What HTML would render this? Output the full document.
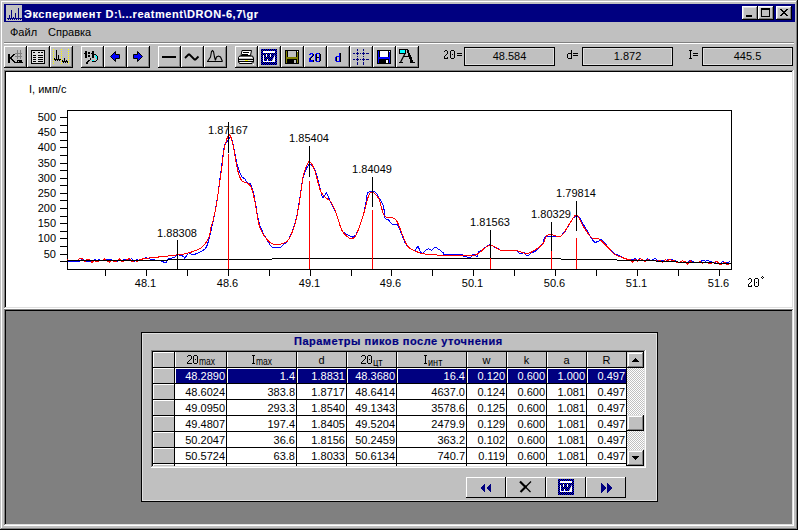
<!DOCTYPE html>
<html><head><meta charset="utf-8"><style>
html,body{margin:0;padding:0;width:798px;height:530px;overflow:hidden;background:#c0c0c0}
body{position:relative;font-family:"Liberation Sans", sans-serif;}
div{box-sizing:border-box}
svg{overflow:visible}
.t{}
</style></head><body>
<svg width="0" height="0" style="position:absolute;left:0;top:0"><filter id="crisp" x="0" y="0" width="100%" height="100%" color-interpolation-filters="sRGB"><feComponentTransfer><feFuncA type="discrete" tableValues="0 0 0 1 1 1 1 1"/></feComponentTransfer></filter></svg><div style="position:absolute;left:0px;top:0px;width:798px;height:530px;background:#c0c0c0;"></div><div style="position:absolute;left:0px;top:0px;width:798px;height:1px;background:#c0c0c0"></div><div style="position:absolute;left:0px;top:0px;width:1px;height:530px;background:#c0c0c0"></div><div style="position:absolute;left:0px;top:529px;width:798px;height:1px;background:#000"></div><div style="position:absolute;left:797px;top:0px;width:1px;height:530px;background:#000"></div><div style="position:absolute;left:1px;top:1px;width:796px;height:1px;background:#fff"></div><div style="position:absolute;left:1px;top:1px;width:1px;height:528px;background:#fff"></div><div style="position:absolute;left:1px;top:528px;width:796px;height:1px;background:#808080"></div><div style="position:absolute;left:796px;top:1px;width:1px;height:528px;background:#808080"></div><div style="position:absolute;left:4px;top:4px;width:791px;height:18px;background:#000080;"></div><svg style="position:absolute;left:6px;top:5px" width="16" height="16" shape-rendering="crispEdges"><rect x="0" y="0" width="16" height="16" fill="#c0c0c0"/><g fill="#000080"><rect x="3" y="10" width="1" height="4"/><rect x="5" y="5" width="1" height="9"/><rect x="7" y="12" width="1" height="2"/><rect x="9" y="8" width="1" height="6"/><rect x="12" y="3" width="1" height="11"/><rect x="1" y="13" width="15" height="1"/><rect x="2" y="14" width="1" height="1"/><rect x="4" y="14" width="1" height="1"/><rect x="6" y="14" width="1" height="1"/><rect x="8" y="14" width="1" height="1"/><rect x="10" y="14" width="1" height="1"/><rect x="12" y="14" width="1" height="1"/><rect x="14" y="14" width="1" height="1"/></g></svg><div class="t" style="position:absolute;left:24px;top:9px;font-size:11px;line-height:11px;color:#fff;white-space:nowrap;font-weight:bold;letter-spacing:0.55px;-webkit-text-stroke:0.1px #fff">Эксперимент D:\...reatment\DRON-6,7\gr</div><div style="position:absolute;left:742px;top:6px;width:16px;height:14px;background:#c0c0c0"></div><div style="position:absolute;left:742px;top:6px;width:16px;height:1px;background:#fff"></div><div style="position:absolute;left:742px;top:6px;width:1px;height:14px;background:#fff"></div><div style="position:absolute;left:742px;top:19px;width:16px;height:1px;background:#000"></div><div style="position:absolute;left:757px;top:6px;width:1px;height:14px;background:#000"></div><div style="position:absolute;left:743px;top:7px;width:14px;height:1px;background:#dfdfdf"></div><div style="position:absolute;left:743px;top:7px;width:1px;height:12px;background:#dfdfdf"></div><div style="position:absolute;left:743px;top:18px;width:14px;height:1px;background:#808080"></div><div style="position:absolute;left:756px;top:7px;width:1px;height:12px;background:#808080"></div><div style="position:absolute;left:758px;top:6px;width:16px;height:14px;background:#c0c0c0"></div><div style="position:absolute;left:758px;top:6px;width:16px;height:1px;background:#fff"></div><div style="position:absolute;left:758px;top:6px;width:1px;height:14px;background:#fff"></div><div style="position:absolute;left:758px;top:19px;width:16px;height:1px;background:#000"></div><div style="position:absolute;left:773px;top:6px;width:1px;height:14px;background:#000"></div><div style="position:absolute;left:759px;top:7px;width:14px;height:1px;background:#dfdfdf"></div><div style="position:absolute;left:759px;top:7px;width:1px;height:12px;background:#dfdfdf"></div><div style="position:absolute;left:759px;top:18px;width:14px;height:1px;background:#808080"></div><div style="position:absolute;left:772px;top:7px;width:1px;height:12px;background:#808080"></div><div style="position:absolute;left:776px;top:6px;width:16px;height:14px;background:#c0c0c0"></div><div style="position:absolute;left:776px;top:6px;width:16px;height:1px;background:#fff"></div><div style="position:absolute;left:776px;top:6px;width:1px;height:14px;background:#fff"></div><div style="position:absolute;left:776px;top:19px;width:16px;height:1px;background:#000"></div><div style="position:absolute;left:791px;top:6px;width:1px;height:14px;background:#000"></div><div style="position:absolute;left:777px;top:7px;width:14px;height:1px;background:#dfdfdf"></div><div style="position:absolute;left:777px;top:7px;width:1px;height:12px;background:#dfdfdf"></div><div style="position:absolute;left:777px;top:18px;width:14px;height:1px;background:#808080"></div><div style="position:absolute;left:790px;top:7px;width:1px;height:12px;background:#808080"></div><div style="position:absolute;left:746px;top:15px;width:6px;height:2px;background:#000;"></div><div style="position:absolute;left:761px;top:8px;width:9px;height:9px;background:#000;"></div><div style="position:absolute;left:762px;top:10px;width:7px;height:6px;background:#c0c0c0;"></div><svg style="position:absolute;left:776px;top:6px" width="16" height="14" shape-rendering="crispEdges"><path d="M4 3h2v1h1v1h2v-1h1v-1h2v1h-1v1h-1v1h-1v1h1v1h1v1h1v1h-2v-1h-1v-1h-2v1h-1v1h-2v-1h1v-1h1v-1h1v-1h-1v-1h-1v-1h-1z" fill="#000"/></svg><div class="t" style="position:absolute;left:10px;top:27px;font-size:11px;line-height:11px;color:#000;white-space:nowrap;">Файл</div><div class="t" style="position:absolute;left:48px;top:27px;font-size:11px;line-height:11px;color:#000;white-space:nowrap;">Справка</div><div style="position:absolute;left:4px;top:42px;width:790px;height:1px;background:#808080;"></div><div style="position:absolute;left:4px;top:43px;width:790px;height:1px;background:#fff;"></div><div style="position:absolute;left:4px;top:46px;width:23px;height:22px;background:#c0c0c0"></div><div style="position:absolute;left:4px;top:46px;width:23px;height:1px;background:#fff"></div><div style="position:absolute;left:4px;top:46px;width:1px;height:22px;background:#fff"></div><div style="position:absolute;left:4px;top:67px;width:23px;height:1px;background:#000"></div><div style="position:absolute;left:26px;top:46px;width:1px;height:22px;background:#000"></div><div style="position:absolute;left:5px;top:47px;width:21px;height:1px;background:#c0c0c0"></div><div style="position:absolute;left:5px;top:47px;width:1px;height:20px;background:#c0c0c0"></div><div style="position:absolute;left:5px;top:66px;width:21px;height:1px;background:#808080"></div><div style="position:absolute;left:25px;top:47px;width:1px;height:20px;background:#808080"></div><div style="position:absolute;left:27px;top:46px;width:23px;height:22px;background:#c0c0c0"></div><div style="position:absolute;left:27px;top:46px;width:23px;height:1px;background:#fff"></div><div style="position:absolute;left:27px;top:46px;width:1px;height:22px;background:#fff"></div><div style="position:absolute;left:27px;top:67px;width:23px;height:1px;background:#000"></div><div style="position:absolute;left:49px;top:46px;width:1px;height:22px;background:#000"></div><div style="position:absolute;left:28px;top:47px;width:21px;height:1px;background:#c0c0c0"></div><div style="position:absolute;left:28px;top:47px;width:1px;height:20px;background:#c0c0c0"></div><div style="position:absolute;left:28px;top:66px;width:21px;height:1px;background:#808080"></div><div style="position:absolute;left:48px;top:47px;width:1px;height:20px;background:#808080"></div><div style="position:absolute;left:50px;top:46px;width:23px;height:22px;background:#c0c0c0"></div><div style="position:absolute;left:50px;top:46px;width:23px;height:1px;background:#fff"></div><div style="position:absolute;left:50px;top:46px;width:1px;height:22px;background:#fff"></div><div style="position:absolute;left:50px;top:67px;width:23px;height:1px;background:#000"></div><div style="position:absolute;left:72px;top:46px;width:1px;height:22px;background:#000"></div><div style="position:absolute;left:51px;top:47px;width:21px;height:1px;background:#c0c0c0"></div><div style="position:absolute;left:51px;top:47px;width:1px;height:20px;background:#c0c0c0"></div><div style="position:absolute;left:51px;top:66px;width:21px;height:1px;background:#808080"></div><div style="position:absolute;left:71px;top:47px;width:1px;height:20px;background:#808080"></div><div style="position:absolute;left:81px;top:46px;width:23px;height:22px;background:#c0c0c0"></div><div style="position:absolute;left:81px;top:46px;width:23px;height:1px;background:#fff"></div><div style="position:absolute;left:81px;top:46px;width:1px;height:22px;background:#fff"></div><div style="position:absolute;left:81px;top:67px;width:23px;height:1px;background:#000"></div><div style="position:absolute;left:103px;top:46px;width:1px;height:22px;background:#000"></div><div style="position:absolute;left:82px;top:47px;width:21px;height:1px;background:#c0c0c0"></div><div style="position:absolute;left:82px;top:47px;width:1px;height:20px;background:#c0c0c0"></div><div style="position:absolute;left:82px;top:66px;width:21px;height:1px;background:#808080"></div><div style="position:absolute;left:102px;top:47px;width:1px;height:20px;background:#808080"></div><div style="position:absolute;left:104px;top:46px;width:23px;height:22px;background:#c0c0c0"></div><div style="position:absolute;left:104px;top:46px;width:23px;height:1px;background:#fff"></div><div style="position:absolute;left:104px;top:46px;width:1px;height:22px;background:#fff"></div><div style="position:absolute;left:104px;top:67px;width:23px;height:1px;background:#000"></div><div style="position:absolute;left:126px;top:46px;width:1px;height:22px;background:#000"></div><div style="position:absolute;left:105px;top:47px;width:21px;height:1px;background:#c0c0c0"></div><div style="position:absolute;left:105px;top:47px;width:1px;height:20px;background:#c0c0c0"></div><div style="position:absolute;left:105px;top:66px;width:21px;height:1px;background:#808080"></div><div style="position:absolute;left:125px;top:47px;width:1px;height:20px;background:#808080"></div><div style="position:absolute;left:127px;top:46px;width:23px;height:22px;background:#c0c0c0"></div><div style="position:absolute;left:127px;top:46px;width:23px;height:1px;background:#fff"></div><div style="position:absolute;left:127px;top:46px;width:1px;height:22px;background:#fff"></div><div style="position:absolute;left:127px;top:67px;width:23px;height:1px;background:#000"></div><div style="position:absolute;left:149px;top:46px;width:1px;height:22px;background:#000"></div><div style="position:absolute;left:128px;top:47px;width:21px;height:1px;background:#c0c0c0"></div><div style="position:absolute;left:128px;top:47px;width:1px;height:20px;background:#c0c0c0"></div><div style="position:absolute;left:128px;top:66px;width:21px;height:1px;background:#808080"></div><div style="position:absolute;left:148px;top:47px;width:1px;height:20px;background:#808080"></div><div style="position:absolute;left:158px;top:46px;width:23px;height:22px;background:#c0c0c0"></div><div style="position:absolute;left:158px;top:46px;width:23px;height:1px;background:#fff"></div><div style="position:absolute;left:158px;top:46px;width:1px;height:22px;background:#fff"></div><div style="position:absolute;left:158px;top:67px;width:23px;height:1px;background:#000"></div><div style="position:absolute;left:180px;top:46px;width:1px;height:22px;background:#000"></div><div style="position:absolute;left:159px;top:47px;width:21px;height:1px;background:#c0c0c0"></div><div style="position:absolute;left:159px;top:47px;width:1px;height:20px;background:#c0c0c0"></div><div style="position:absolute;left:159px;top:66px;width:21px;height:1px;background:#808080"></div><div style="position:absolute;left:179px;top:47px;width:1px;height:20px;background:#808080"></div><div style="position:absolute;left:181px;top:46px;width:23px;height:22px;background:#c0c0c0"></div><div style="position:absolute;left:181px;top:46px;width:23px;height:1px;background:#fff"></div><div style="position:absolute;left:181px;top:46px;width:1px;height:22px;background:#fff"></div><div style="position:absolute;left:181px;top:67px;width:23px;height:1px;background:#000"></div><div style="position:absolute;left:203px;top:46px;width:1px;height:22px;background:#000"></div><div style="position:absolute;left:182px;top:47px;width:21px;height:1px;background:#c0c0c0"></div><div style="position:absolute;left:182px;top:47px;width:1px;height:20px;background:#c0c0c0"></div><div style="position:absolute;left:182px;top:66px;width:21px;height:1px;background:#808080"></div><div style="position:absolute;left:202px;top:47px;width:1px;height:20px;background:#808080"></div><div style="position:absolute;left:204px;top:46px;width:23px;height:22px;background:#c0c0c0"></div><div style="position:absolute;left:204px;top:46px;width:23px;height:1px;background:#fff"></div><div style="position:absolute;left:204px;top:46px;width:1px;height:22px;background:#fff"></div><div style="position:absolute;left:204px;top:67px;width:23px;height:1px;background:#000"></div><div style="position:absolute;left:226px;top:46px;width:1px;height:22px;background:#000"></div><div style="position:absolute;left:205px;top:47px;width:21px;height:1px;background:#c0c0c0"></div><div style="position:absolute;left:205px;top:47px;width:1px;height:20px;background:#c0c0c0"></div><div style="position:absolute;left:205px;top:66px;width:21px;height:1px;background:#808080"></div><div style="position:absolute;left:225px;top:47px;width:1px;height:20px;background:#808080"></div><div style="position:absolute;left:235px;top:46px;width:23px;height:22px;background:#c0c0c0"></div><div style="position:absolute;left:235px;top:46px;width:23px;height:1px;background:#fff"></div><div style="position:absolute;left:235px;top:46px;width:1px;height:22px;background:#fff"></div><div style="position:absolute;left:235px;top:67px;width:23px;height:1px;background:#000"></div><div style="position:absolute;left:257px;top:46px;width:1px;height:22px;background:#000"></div><div style="position:absolute;left:236px;top:47px;width:21px;height:1px;background:#c0c0c0"></div><div style="position:absolute;left:236px;top:47px;width:1px;height:20px;background:#c0c0c0"></div><div style="position:absolute;left:236px;top:66px;width:21px;height:1px;background:#808080"></div><div style="position:absolute;left:256px;top:47px;width:1px;height:20px;background:#808080"></div><div style="position:absolute;left:258px;top:46px;width:23px;height:22px;background:#c0c0c0"></div><div style="position:absolute;left:258px;top:46px;width:23px;height:1px;background:#fff"></div><div style="position:absolute;left:258px;top:46px;width:1px;height:22px;background:#fff"></div><div style="position:absolute;left:258px;top:67px;width:23px;height:1px;background:#000"></div><div style="position:absolute;left:280px;top:46px;width:1px;height:22px;background:#000"></div><div style="position:absolute;left:259px;top:47px;width:21px;height:1px;background:#c0c0c0"></div><div style="position:absolute;left:259px;top:47px;width:1px;height:20px;background:#c0c0c0"></div><div style="position:absolute;left:259px;top:66px;width:21px;height:1px;background:#808080"></div><div style="position:absolute;left:279px;top:47px;width:1px;height:20px;background:#808080"></div><div style="position:absolute;left:281px;top:46px;width:23px;height:22px;background:#c0c0c0"></div><div style="position:absolute;left:281px;top:46px;width:23px;height:1px;background:#fff"></div><div style="position:absolute;left:281px;top:46px;width:1px;height:22px;background:#fff"></div><div style="position:absolute;left:281px;top:67px;width:23px;height:1px;background:#000"></div><div style="position:absolute;left:303px;top:46px;width:1px;height:22px;background:#000"></div><div style="position:absolute;left:282px;top:47px;width:21px;height:1px;background:#c0c0c0"></div><div style="position:absolute;left:282px;top:47px;width:1px;height:20px;background:#c0c0c0"></div><div style="position:absolute;left:282px;top:66px;width:21px;height:1px;background:#808080"></div><div style="position:absolute;left:302px;top:47px;width:1px;height:20px;background:#808080"></div><div style="position:absolute;left:304px;top:46px;width:23px;height:22px;background:#c0c0c0"></div><div style="position:absolute;left:304px;top:46px;width:23px;height:1px;background:#fff"></div><div style="position:absolute;left:304px;top:46px;width:1px;height:22px;background:#fff"></div><div style="position:absolute;left:304px;top:67px;width:23px;height:1px;background:#000"></div><div style="position:absolute;left:326px;top:46px;width:1px;height:22px;background:#000"></div><div style="position:absolute;left:305px;top:47px;width:21px;height:1px;background:#c0c0c0"></div><div style="position:absolute;left:305px;top:47px;width:1px;height:20px;background:#c0c0c0"></div><div style="position:absolute;left:305px;top:66px;width:21px;height:1px;background:#808080"></div><div style="position:absolute;left:325px;top:47px;width:1px;height:20px;background:#808080"></div><div style="position:absolute;left:327px;top:46px;width:23px;height:22px;background:#c0c0c0"></div><div style="position:absolute;left:327px;top:46px;width:23px;height:1px;background:#fff"></div><div style="position:absolute;left:327px;top:46px;width:1px;height:22px;background:#fff"></div><div style="position:absolute;left:327px;top:67px;width:23px;height:1px;background:#000"></div><div style="position:absolute;left:349px;top:46px;width:1px;height:22px;background:#000"></div><div style="position:absolute;left:328px;top:47px;width:21px;height:1px;background:#c0c0c0"></div><div style="position:absolute;left:328px;top:47px;width:1px;height:20px;background:#c0c0c0"></div><div style="position:absolute;left:328px;top:66px;width:21px;height:1px;background:#808080"></div><div style="position:absolute;left:348px;top:47px;width:1px;height:20px;background:#808080"></div><div style="position:absolute;left:350px;top:46px;width:23px;height:22px;background:#c0c0c0"></div><div style="position:absolute;left:350px;top:46px;width:23px;height:1px;background:#fff"></div><div style="position:absolute;left:350px;top:46px;width:1px;height:22px;background:#fff"></div><div style="position:absolute;left:350px;top:67px;width:23px;height:1px;background:#000"></div><div style="position:absolute;left:372px;top:46px;width:1px;height:22px;background:#000"></div><div style="position:absolute;left:351px;top:47px;width:21px;height:1px;background:#c0c0c0"></div><div style="position:absolute;left:351px;top:47px;width:1px;height:20px;background:#c0c0c0"></div><div style="position:absolute;left:351px;top:66px;width:21px;height:1px;background:#808080"></div><div style="position:absolute;left:371px;top:47px;width:1px;height:20px;background:#808080"></div><div style="position:absolute;left:373px;top:46px;width:23px;height:22px;background:#c0c0c0"></div><div style="position:absolute;left:373px;top:46px;width:23px;height:1px;background:#fff"></div><div style="position:absolute;left:373px;top:46px;width:1px;height:22px;background:#fff"></div><div style="position:absolute;left:373px;top:67px;width:23px;height:1px;background:#000"></div><div style="position:absolute;left:395px;top:46px;width:1px;height:22px;background:#000"></div><div style="position:absolute;left:374px;top:47px;width:21px;height:1px;background:#c0c0c0"></div><div style="position:absolute;left:374px;top:47px;width:1px;height:20px;background:#c0c0c0"></div><div style="position:absolute;left:374px;top:66px;width:21px;height:1px;background:#808080"></div><div style="position:absolute;left:394px;top:47px;width:1px;height:20px;background:#808080"></div><div style="position:absolute;left:396px;top:46px;width:23px;height:22px;background:#c0c0c0"></div><div style="position:absolute;left:396px;top:46px;width:23px;height:1px;background:#fff"></div><div style="position:absolute;left:396px;top:46px;width:1px;height:22px;background:#fff"></div><div style="position:absolute;left:396px;top:67px;width:23px;height:1px;background:#000"></div><div style="position:absolute;left:418px;top:46px;width:1px;height:22px;background:#000"></div><div style="position:absolute;left:397px;top:47px;width:21px;height:1px;background:#c0c0c0"></div><div style="position:absolute;left:397px;top:47px;width:1px;height:20px;background:#c0c0c0"></div><div style="position:absolute;left:397px;top:66px;width:21px;height:1px;background:#808080"></div><div style="position:absolute;left:417px;top:47px;width:1px;height:20px;background:#808080"></div><div style="position:absolute;left:464px;top:47px;width:91px;height:19px;background:#c0c0c0"></div><div style="position:absolute;left:464px;top:47px;width:91px;height:1px;background:#000"></div><div style="position:absolute;left:464px;top:47px;width:1px;height:19px;background:#000"></div><div style="position:absolute;left:464px;top:65px;width:91px;height:1px;background:#000"></div><div style="position:absolute;left:554px;top:47px;width:1px;height:19px;background:#000"></div><div style="position:absolute;left:465px;top:48px;width:89px;height:1px;background:#dfdfdf"></div><div style="position:absolute;left:465px;top:48px;width:1px;height:17px;background:#dfdfdf"></div><div style="position:absolute;left:465px;top:64px;width:89px;height:1px;background:#dfdfdf"></div><div style="position:absolute;left:553px;top:48px;width:1px;height:17px;background:#dfdfdf"></div><div class="t" style="position:absolute;left:409.5px;width:200px;top:51px;font-size:11px;line-height:11px;color:#000;white-space:nowrap;text-align:center;">48.584</div><div style="position:absolute;left:582px;top:47px;width:91px;height:19px;background:#c0c0c0"></div><div style="position:absolute;left:582px;top:47px;width:91px;height:1px;background:#000"></div><div style="position:absolute;left:582px;top:47px;width:1px;height:19px;background:#000"></div><div style="position:absolute;left:582px;top:65px;width:91px;height:1px;background:#000"></div><div style="position:absolute;left:672px;top:47px;width:1px;height:19px;background:#000"></div><div style="position:absolute;left:583px;top:48px;width:89px;height:1px;background:#dfdfdf"></div><div style="position:absolute;left:583px;top:48px;width:1px;height:17px;background:#dfdfdf"></div><div style="position:absolute;left:583px;top:64px;width:89px;height:1px;background:#dfdfdf"></div><div style="position:absolute;left:671px;top:48px;width:1px;height:17px;background:#dfdfdf"></div><div class="t" style="position:absolute;left:527.5px;width:200px;top:51px;font-size:11px;line-height:11px;color:#000;white-space:nowrap;text-align:center;">1.872</div><div style="position:absolute;left:702px;top:47px;width:91px;height:19px;background:#c0c0c0"></div><div style="position:absolute;left:702px;top:47px;width:91px;height:1px;background:#000"></div><div style="position:absolute;left:702px;top:47px;width:1px;height:19px;background:#000"></div><div style="position:absolute;left:702px;top:65px;width:91px;height:1px;background:#000"></div><div style="position:absolute;left:792px;top:47px;width:1px;height:19px;background:#000"></div><div style="position:absolute;left:703px;top:48px;width:89px;height:1px;background:#dfdfdf"></div><div style="position:absolute;left:703px;top:48px;width:1px;height:17px;background:#dfdfdf"></div><div style="position:absolute;left:703px;top:64px;width:89px;height:1px;background:#dfdfdf"></div><div style="position:absolute;left:791px;top:48px;width:1px;height:17px;background:#dfdfdf"></div><div class="t" style="position:absolute;left:647.5px;width:200px;top:51px;font-size:11px;line-height:11px;color:#000;white-space:nowrap;text-align:center;">445.5</div><svg style="position:absolute;left:444px;top:50px" width="18" height="9" shape-rendering="crispEdges"><g fill="#000"><rect x="1" y="0" width="1" height="1"/><rect x="2" y="0" width="1" height="1"/><rect x="0" y="1" width="1" height="1"/><rect x="3" y="1" width="1" height="1"/><rect x="3" y="2" width="1" height="1"/><rect x="3" y="3" width="1" height="1"/><rect x="2" y="4" width="1" height="1"/><rect x="1" y="5" width="1" height="1"/><rect x="0" y="6" width="1" height="1"/><rect x="0" y="7" width="1" height="1"/><rect x="3" y="7" width="1" height="1"/><rect x="0" y="8" width="1" height="1"/><rect x="1" y="8" width="1" height="1"/><rect x="2" y="8" width="1" height="1"/><rect x="3" y="8" width="1" height="1"/><rect x="7" y="0" width="1" height="1"/><rect x="8" y="0" width="1" height="1"/><rect x="9" y="0" width="1" height="1"/><rect x="6" y="1" width="1" height="1"/><rect x="10" y="1" width="1" height="1"/><rect x="6" y="2" width="1" height="1"/><rect x="10" y="2" width="1" height="1"/><rect x="6" y="3" width="1" height="1"/><rect x="10" y="3" width="1" height="1"/><rect x="6" y="4" width="1" height="1"/><rect x="8" y="4" width="1" height="1"/><rect x="10" y="4" width="1" height="1"/><rect x="6" y="5" width="1" height="1"/><rect x="10" y="5" width="1" height="1"/><rect x="6" y="6" width="1" height="1"/><rect x="10" y="6" width="1" height="1"/><rect x="6" y="7" width="1" height="1"/><rect x="10" y="7" width="1" height="1"/><rect x="7" y="8" width="1" height="1"/><rect x="8" y="8" width="1" height="1"/><rect x="9" y="8" width="1" height="1"/><rect x="13" y="3" width="1" height="1"/><rect x="14" y="3" width="1" height="1"/><rect x="15" y="3" width="1" height="1"/><rect x="16" y="3" width="1" height="1"/><rect x="17" y="3" width="1" height="1"/><rect x="13" y="5" width="1" height="1"/><rect x="14" y="5" width="1" height="1"/><rect x="15" y="5" width="1" height="1"/><rect x="16" y="5" width="1" height="1"/><rect x="17" y="5" width="1" height="1"/></g></svg><svg style="position:absolute;left:567px;top:50px" width="11" height="9" shape-rendering="crispEdges"><g fill="#000"><rect x="4" y="0" width="1" height="1"/><rect x="4" y="1" width="1" height="1"/><rect x="4" y="2" width="1" height="1"/><rect x="1" y="3" width="1" height="1"/><rect x="2" y="3" width="1" height="1"/><rect x="3" y="3" width="1" height="1"/><rect x="4" y="3" width="1" height="1"/><rect x="0" y="4" width="1" height="1"/><rect x="4" y="4" width="1" height="1"/><rect x="0" y="5" width="1" height="1"/><rect x="4" y="5" width="1" height="1"/><rect x="0" y="6" width="1" height="1"/><rect x="4" y="6" width="1" height="1"/><rect x="0" y="7" width="1" height="1"/><rect x="4" y="7" width="1" height="1"/><rect x="1" y="8" width="1" height="1"/><rect x="2" y="8" width="1" height="1"/><rect x="3" y="8" width="1" height="1"/><rect x="4" y="8" width="1" height="1"/><rect x="6" y="3" width="1" height="1"/><rect x="7" y="3" width="1" height="1"/><rect x="8" y="3" width="1" height="1"/><rect x="9" y="3" width="1" height="1"/><rect x="10" y="3" width="1" height="1"/><rect x="6" y="5" width="1" height="1"/><rect x="7" y="5" width="1" height="1"/><rect x="8" y="5" width="1" height="1"/><rect x="9" y="5" width="1" height="1"/><rect x="10" y="5" width="1" height="1"/></g></svg><svg style="position:absolute;left:689px;top:50px" width="9" height="9" shape-rendering="crispEdges"><g fill="#000"><rect x="0" y="0" width="1" height="1"/><rect x="1" y="0" width="1" height="1"/><rect x="2" y="0" width="1" height="1"/><rect x="1" y="1" width="1" height="1"/><rect x="1" y="2" width="1" height="1"/><rect x="1" y="3" width="1" height="1"/><rect x="1" y="4" width="1" height="1"/><rect x="1" y="5" width="1" height="1"/><rect x="1" y="6" width="1" height="1"/><rect x="1" y="7" width="1" height="1"/><rect x="0" y="8" width="1" height="1"/><rect x="1" y="8" width="1" height="1"/><rect x="2" y="8" width="1" height="1"/><rect x="4" y="3" width="1" height="1"/><rect x="5" y="3" width="1" height="1"/><rect x="6" y="3" width="1" height="1"/><rect x="7" y="3" width="1" height="1"/><rect x="8" y="3" width="1" height="1"/><rect x="4" y="5" width="1" height="1"/><rect x="5" y="5" width="1" height="1"/><rect x="6" y="5" width="1" height="1"/><rect x="7" y="5" width="1" height="1"/><rect x="8" y="5" width="1" height="1"/></g></svg><div style="position:absolute;left:4px;top:70px;width:790px;height:239px;background:#fff"></div><div style="position:absolute;left:4px;top:70px;width:790px;height:1px;background:#808080"></div><div style="position:absolute;left:4px;top:70px;width:1px;height:239px;background:#808080"></div><div style="position:absolute;left:4px;top:308px;width:790px;height:1px;background:#fff"></div><div style="position:absolute;left:793px;top:70px;width:1px;height:239px;background:#fff"></div><div style="position:absolute;left:5px;top:71px;width:788px;height:1px;background:#000"></div><div style="position:absolute;left:5px;top:71px;width:1px;height:237px;background:#000"></div><div style="position:absolute;left:5px;top:307px;width:788px;height:1px;background:#dfdfdf"></div><div style="position:absolute;left:792px;top:71px;width:1px;height:237px;background:#dfdfdf"></div><div style="position:absolute;left:4px;top:309px;width:790px;height:217px;background:#808080"></div><div style="position:absolute;left:4px;top:309px;width:790px;height:1px;background:#808080"></div><div style="position:absolute;left:4px;top:309px;width:1px;height:217px;background:#808080"></div><div style="position:absolute;left:4px;top:525px;width:790px;height:1px;background:#fff"></div><div style="position:absolute;left:793px;top:309px;width:1px;height:217px;background:#fff"></div><div style="position:absolute;left:5px;top:310px;width:788px;height:1px;background:#000"></div><div style="position:absolute;left:5px;top:310px;width:1px;height:215px;background:#000"></div><div style="position:absolute;left:5px;top:524px;width:788px;height:1px;background:#dfdfdf"></div><div style="position:absolute;left:792px;top:310px;width:1px;height:215px;background:#dfdfdf"></div><svg style="position:absolute;left:0;top:0" width="798" height="530"><rect x="67.5" y="110.5" width="664" height="159" fill="none" stroke="#000" stroke-width="1" shape-rendering="crispEdges"/><line x1="60" y1="261.5" x2="67" y2="261.5" stroke="#000" stroke-width="1" shape-rendering="crispEdges"/><line x1="60" y1="254.5" x2="67" y2="254.5" stroke="#000" stroke-width="1" shape-rendering="crispEdges"/><line x1="60" y1="246.5" x2="67" y2="246.5" stroke="#000" stroke-width="1" shape-rendering="crispEdges"/><line x1="60" y1="238.5" x2="67" y2="238.5" stroke="#000" stroke-width="1" shape-rendering="crispEdges"/><line x1="60" y1="231.5" x2="67" y2="231.5" stroke="#000" stroke-width="1" shape-rendering="crispEdges"/><line x1="60" y1="223.5" x2="67" y2="223.5" stroke="#000" stroke-width="1" shape-rendering="crispEdges"/><line x1="60" y1="216.5" x2="67" y2="216.5" stroke="#000" stroke-width="1" shape-rendering="crispEdges"/><line x1="60" y1="208.5" x2="67" y2="208.5" stroke="#000" stroke-width="1" shape-rendering="crispEdges"/><line x1="60" y1="200.5" x2="67" y2="200.5" stroke="#000" stroke-width="1" shape-rendering="crispEdges"/><line x1="60" y1="193.5" x2="67" y2="193.5" stroke="#000" stroke-width="1" shape-rendering="crispEdges"/><line x1="60" y1="185.5" x2="67" y2="185.5" stroke="#000" stroke-width="1" shape-rendering="crispEdges"/><line x1="60" y1="178.5" x2="67" y2="178.5" stroke="#000" stroke-width="1" shape-rendering="crispEdges"/><line x1="60" y1="170.5" x2="67" y2="170.5" stroke="#000" stroke-width="1" shape-rendering="crispEdges"/><line x1="60" y1="163.5" x2="67" y2="163.5" stroke="#000" stroke-width="1" shape-rendering="crispEdges"/><line x1="60" y1="155.5" x2="67" y2="155.5" stroke="#000" stroke-width="1" shape-rendering="crispEdges"/><line x1="60" y1="147.5" x2="67" y2="147.5" stroke="#000" stroke-width="1" shape-rendering="crispEdges"/><line x1="60" y1="140.5" x2="67" y2="140.5" stroke="#000" stroke-width="1" shape-rendering="crispEdges"/><line x1="60" y1="132.5" x2="67" y2="132.5" stroke="#000" stroke-width="1" shape-rendering="crispEdges"/><line x1="60" y1="125.5" x2="67" y2="125.5" stroke="#000" stroke-width="1" shape-rendering="crispEdges"/><line x1="60" y1="117.5" x2="67" y2="117.5" stroke="#000" stroke-width="1" shape-rendering="crispEdges"/><line x1="105.5" y1="270" x2="105.5" y2="276" stroke="#000" stroke-width="1" shape-rendering="crispEdges"/><line x1="146.5" y1="270" x2="146.5" y2="276" stroke="#000" stroke-width="1" shape-rendering="crispEdges"/><line x1="187.5" y1="270" x2="187.5" y2="276" stroke="#000" stroke-width="1" shape-rendering="crispEdges"/><line x1="228.5" y1="270" x2="228.5" y2="276" stroke="#000" stroke-width="1" shape-rendering="crispEdges"/><line x1="269.5" y1="270" x2="269.5" y2="276" stroke="#000" stroke-width="1" shape-rendering="crispEdges"/><line x1="310.5" y1="270" x2="310.5" y2="276" stroke="#000" stroke-width="1" shape-rendering="crispEdges"/><line x1="351.5" y1="270" x2="351.5" y2="276" stroke="#000" stroke-width="1" shape-rendering="crispEdges"/><line x1="391.5" y1="270" x2="391.5" y2="276" stroke="#000" stroke-width="1" shape-rendering="crispEdges"/><line x1="432.5" y1="270" x2="432.5" y2="276" stroke="#000" stroke-width="1" shape-rendering="crispEdges"/><line x1="473.5" y1="270" x2="473.5" y2="276" stroke="#000" stroke-width="1" shape-rendering="crispEdges"/><line x1="514.5" y1="270" x2="514.5" y2="276" stroke="#000" stroke-width="1" shape-rendering="crispEdges"/><line x1="555.5" y1="270" x2="555.5" y2="276" stroke="#000" stroke-width="1" shape-rendering="crispEdges"/><line x1="596.5" y1="270" x2="596.5" y2="276" stroke="#000" stroke-width="1" shape-rendering="crispEdges"/><line x1="637.5" y1="270" x2="637.5" y2="276" stroke="#000" stroke-width="1" shape-rendering="crispEdges"/><line x1="678.5" y1="270" x2="678.5" y2="276" stroke="#000" stroke-width="1" shape-rendering="crispEdges"/><line x1="719.5" y1="270" x2="719.5" y2="276" stroke="#000" stroke-width="1" shape-rendering="crispEdges"/><polyline points="67.0,260.9 69.5,261.3 72.0,261.4 74.5,261.9 77.0,261.3 79.5,261.9 82.0,259.0 84.5,260.4 87.0,261.9 89.5,261.0 92.0,261.8 94.5,259.3 97.0,260.4 99.5,259.7 102.0,260.6 104.5,260.7 107.0,258.9 109.5,259.6 112.0,259.8 114.5,261.8 117.0,261.4 119.5,259.4 122.0,261.5 124.5,259.3 127.0,260.9 129.5,259.3 132.0,258.9 134.5,261.7 137.0,259.6 140.0,260.5 142.6,259.0 145.6,257.7 147.3,258.0 149.0,258.8 151.8,259.4 155.0,260.0 158.3,260.5 161.4,261.0 164.0,262.2 166.0,262.8 167.0,261.0 168.2,258.8 170.9,258.2 173.8,257.7 176.0,256.1 178.3,254.9 181.4,255.5 184.0,256.6 184.6,257.9 185.0,258.3 186.6,255.4 188.5,252.6 190.3,253.5 192.4,254.9 195.3,254.1 198.6,252.6 202.2,251.1 205.4,248.7 207.3,244.9 208.8,239.7 210.7,232.0 212.2,225.0 212.6,223.6 213.0,222.0 214.5,214.6 216.3,205.0 217.9,194.6 219.3,184.0 220.5,174.8 221.6,166.0 222.8,156.2 223.9,148.0 224.9,144.8 226.1,143.0 228.3,139.2 230.6,137.0 231.8,138.9 233.0,144.0 234.9,153.5 236.8,163.0 238.0,167.2 239.0,170.0 240.4,173.8 242.0,177.0 243.5,178.1 245.0,179.0 246.6,181.7 248.0,184.0 249.0,183.2 250.0,183.0 251.6,186.6 253.3,192.0 254.6,198.3 256.0,206.0 257.5,215.9 259.8,226.0 264.1,234.9 268.3,242.0 270.5,245.5 272.0,247.0 273.4,247.2 275.0,247.0 277.4,247.8 280.0,248.0 282.0,246.3 284.0,244.0 286.2,242.5 288.7,239.4 292.1,232.1 295.4,222.4 297.8,210.8 299.7,199.0 301.2,188.7 302.5,180.4 303.5,176.1 304.7,173.0 306.8,167.7 309.2,164.0 311.9,165.4 314.5,169.0 316.1,173.1 317.5,178.0 319.1,184.1 320.6,190.0 321.8,195.1 323.0,198.0 324.6,195.5 326.4,193.0 328.1,196.1 330.0,201.0 332.5,205.4 335.3,211.0 338.5,220.4 341.3,229.0 342.1,231.4 343.0,232.0 346.2,234.2 350.0,236.0 352.9,237.2 356.0,235.0 360.2,224.8 364.0,212.6 365.9,202.6 367.0,195.0 367.8,192.4 369.0,192.0 371.9,191.6 375.0,192.0 376.5,193.3 378.0,196.0 380.9,200.8 383.6,206.6 384.5,212.9 385.0,218.0 386.3,219.1 388.0,219.4 390.2,222.1 392.6,224.7 395.0,224.9 397.0,224.7 397.8,225.2 398.7,227.0 400.9,232.2 403.2,238.0 404.5,241.5 406.0,244.3 409.0,247.3 412.0,249.6 413.7,250.6 415.0,250.4 416.5,248.2 418.0,246.6 419.3,248.9 420.4,251.9 421.5,253.2 422.6,253.4 424.1,252.1 425.7,250.4 427.2,249.4 428.7,248.9 430.2,249.7 431.7,250.4 433.1,248.9 434.7,247.4 436.9,248.1 439.2,249.6 441.7,251.5 443.8,253.4 443.9,254.4 445.3,254.9 452.8,255.0 460.4,254.9 462.1,254.4 462.0,254.2 462.3,255.2 463.4,256.4 467.2,257.1 471.0,257.2 472.0,256.1 472.5,254.9 474.0,254.6 475.5,254.9 476.3,256.4 477.0,257.2 477.6,254.9 478.5,252.0 479.9,251.0 482.0,250.0 485.9,247.0 489.8,244.5 492.2,245.3 494.0,247.0 495.5,247.5 497.0,248.0 498.9,249.2 501.0,250.4 503.2,250.9 506.0,251.0 510.5,250.4 514.7,250.0 516.7,250.8 518.0,252.0 519.5,253.2 521.0,254.0 522.5,252.9 524.0,252.0 525.4,254.1 527.0,256.0 528.9,254.9 531.0,253.0 533.0,252.3 535.5,251.0 539.3,247.3 543.0,243.0 544.0,239.0 546.0,236.0 553.2,236.3 561.0,236.0 565.7,230.6 569.4,224.0 573.1,218.2 576.6,215.0 579.9,218.4 583.0,224.0 585.5,227.9 588.0,232.0 591.3,238.1 594.9,242.8 598.3,241.2 601.7,239.4 605.1,243.1 608.5,248.0 611.5,251.2 615.3,254.0 622.5,257.3 628.8,259.8 630.0,259.7 632.5,259.4 635.0,258.7 637.5,260.9 640.0,258.3 642.5,259.8 645.0,261.0 647.5,258.5 650.0,260.0 652.5,260.1 655.0,258.4 657.5,260.4 660.0,261.4 662.5,260.7 665.0,261.5 667.5,259.8 670.0,260.0 672.5,259.6 675.0,260.8 677.5,262.1 680.0,262.1 682.5,262.6 685.0,261.5 687.5,262.5 690.0,260.6 692.5,261.2 695.0,262.3 697.5,262.5 700.0,261.6 702.5,260.6 705.0,261.1 707.5,260.9 710.0,261.1 712.5,262.7 715.0,261.9 717.5,264.0 720.0,263.9 722.5,261.5 725.0,262.4 727.5,262.8 730.0,261.4" fill="none" stroke="#0000ff" stroke-width="1" shape-rendering="crispEdges"/><polyline points="67.0,259.5 69.5,260.7 72.0,260.0 74.5,260.9 77.0,261.0 79.5,258.8 82.0,258.6 84.5,261.8 87.0,259.5 89.5,259.4 92.0,262.5 94.5,260.4 97.0,261.8 99.5,260.4 102.0,261.1 104.5,259.1 107.0,261.0 109.5,262.0 112.0,260.6 114.5,261.5 117.0,261.2 119.5,258.8 122.0,261.5 124.5,260.9 127.0,259.7 129.5,258.6 132.0,262.0 134.5,260.4 137.0,261.4 140.0,259.4 142.0,259.1 144.9,258.6 148.2,258.1 151.3,257.7 154.0,257.4 156.7,257.2 159.5,256.9 162.5,256.6 166.0,256.2 169.9,255.8 173.8,255.3 177.2,254.9 180.0,254.5 182.5,254.2 184.9,253.8 187.4,253.2 190.3,252.4 193.3,251.4 196.2,250.3 198.6,249.2 200.4,248.2 201.9,247.2 203.1,246.0 204.3,244.7 205.6,243.1 206.8,241.4 207.9,239.5 208.8,237.4 209.5,235.0 210.1,232.3 210.5,229.6 211.0,227.3 211.5,225.6 211.9,224.3 212.4,222.9 213.0,220.7 213.7,217.5 214.6,213.7 215.5,209.4 216.3,205.0 217.1,200.3 217.9,195.3 218.6,190.2 219.3,185.4 219.9,181.1 220.5,177.0 221.0,173.0 221.6,168.8 222.2,164.2 222.8,159.3 223.3,154.6 223.9,150.7 224.4,147.7 225.0,145.4 225.5,143.5 226.1,141.6 226.7,139.5 227.4,137.4 228.1,135.7 228.8,134.8 229.4,134.8 230.1,135.4 230.7,136.7 231.4,138.6 232.1,141.3 232.9,144.8 233.7,148.6 234.4,152.2 235.0,155.7 235.6,159.3 236.1,162.7 236.7,165.8 237.3,168.4 237.8,170.8 238.4,172.9 239.0,174.8 239.6,176.6 240.3,178.2 241.1,179.6 242.0,180.8 243.2,181.6 244.6,182.1 246.0,182.5 247.3,183.1 248.4,183.9 249.3,184.7 250.2,185.7 251.0,186.9 251.7,188.4 252.2,190.2 252.8,192.2 253.3,194.4 253.8,196.6 254.3,198.8 254.9,201.4 255.6,205.0 256.4,210.0 257.3,216.1 258.4,222.2 259.8,227.5 261.7,231.7 263.9,235.4 266.2,238.5 268.3,241.0 270.1,242.7 271.8,243.6 273.4,244.2 275.0,244.5 276.7,244.7 278.4,244.6 280.2,244.2 281.9,243.7 283.6,243.2 285.3,242.6 287.0,241.4 288.7,239.4 290.4,236.2 292.2,232.0 293.9,227.3 295.4,222.4 296.7,217.2 297.8,211.6 298.8,205.9 299.7,200.4 300.5,195.0 301.2,189.6 301.9,184.6 302.5,180.4 303.0,177.4 303.5,175.2 304.0,173.4 304.7,171.3 305.6,168.5 306.8,165.3 308.0,162.7 309.2,161.5 310.5,162.2 311.9,164.4 313.3,167.1 314.5,169.8 315.4,172.3 316.1,175.0 316.8,177.7 317.5,180.4 318.2,183.2 319.0,186.0 319.7,188.7 320.6,191.0 321.6,192.8 322.6,194.3 323.8,195.7 325.0,197.0 326.4,198.2 327.9,199.3 329.4,200.5 330.8,202.0 332.0,203.8 333.0,205.7 334.1,208.0 335.3,211.0 336.7,215.2 338.4,220.2 339.9,225.2 341.3,229.0 342.4,231.3 343.3,232.7 344.1,233.6 345.0,234.5 346.0,235.5 347.0,236.4 348.1,237.2 349.0,237.8 349.8,238.3 350.5,238.6 351.2,238.7 352.0,238.5 352.9,238.2 353.9,237.9 355.0,236.9 356.4,234.5 358.1,230.2 360.2,224.3 362.2,218.1 364.0,212.6 365.4,207.8 366.5,203.2 367.5,199.1 368.5,196.0 369.5,193.9 370.4,192.7 371.4,192.2 372.6,192.3 374.1,193.0 375.7,194.4 377.4,196.4 379.0,199.0 380.3,202.8 381.5,207.6 382.8,212.3 384.3,215.7 386.3,217.2 388.5,217.6 390.7,217.6 392.6,217.9 394.0,218.5 395.0,219.0 396.0,219.9 397.2,221.7 398.6,224.8 400.2,228.9 401.8,233.2 403.2,236.8 404.4,239.6 405.3,242.0 406.3,244.0 407.5,245.8 408.8,247.3 410.1,248.4 411.6,249.4 413.6,250.4 416.0,251.5 418.8,252.5 422.0,253.5 425.7,254.2 429.9,254.7 434.6,254.9 439.7,255.1 445.3,255.2 452.1,255.3 459.8,255.4 467.0,255.3 472.5,255.2 475.4,255.0 476.5,254.8 477.1,254.3 478.5,253.4 481.0,251.5 483.8,248.8 486.9,246.4 489.8,245.1 492.5,245.6 495.2,247.2 498.0,249.1 501.0,250.4 504.3,250.7 507.8,250.6 511.3,250.3 514.7,250.4 518.0,251.1 521.2,252.1 524.2,253.0 527.0,253.3 529.4,252.9 531.5,252.0 533.5,250.8 535.5,249.6 537.5,248.3 539.6,246.9 541.4,245.4 543.0,243.7 544.1,241.8 544.9,239.6 545.6,237.5 546.5,236.0 547.6,235.2 548.7,234.8 550.0,234.7 551.6,234.7 553.7,235.2 556.1,236.0 558.6,236.5 561.0,236.0 563.2,233.9 565.3,230.7 567.4,227.1 569.4,224.0 571.3,221.0 573.1,218.0 574.9,215.6 576.6,214.8 578.2,216.1 579.7,219.0 581.3,222.5 583.0,225.8 585.0,229.0 587.2,232.4 589.4,235.5 591.5,237.7 593.2,238.5 594.8,238.3 596.4,238.0 598.3,238.6 600.7,240.4 603.4,242.9 606.1,245.6 608.5,248.0 610.3,249.9 611.7,251.6 613.2,253.2 615.3,254.7 618.5,256.2 622.5,257.7 626.2,258.9 628.8,259.8 630.0,259.3 632.5,262.0 635.0,259.0 637.5,261.0 640.0,258.8 642.5,259.4 645.0,262.1 647.5,259.3 650.0,260.8 652.5,260.2 655.0,260.1 657.5,261.3 660.0,260.2 662.5,262.5 665.0,259.8 667.5,260.3 670.0,259.6 672.5,260.5 675.0,261.0 677.5,262.7 680.0,261.9 682.5,260.9 685.0,261.4 687.5,264.1 690.0,260.7 692.5,262.7 695.0,261.9 697.5,262.9 700.0,261.7 702.5,263.0 705.0,262.3 707.5,262.8 710.0,263.7 712.5,262.6 715.0,262.0 717.5,261.7 720.0,264.9 722.5,263.3 725.0,262.2 727.5,264.9 730.0,263.6" fill="none" stroke="#ff0000" stroke-width="1" shape-rendering="crispEdges"/><line x1="67" y1="260.5" x2="168" y2="260.5" stroke="#000" stroke-width="1" shape-rendering="crispEdges"/><line x1="168" y1="259.5" x2="272" y2="259.5" stroke="#000" stroke-width="1" shape-rendering="crispEdges"/><line x1="272" y1="258.5" x2="561" y2="258.5" stroke="#000" stroke-width="1" shape-rendering="crispEdges"/><line x1="561" y1="259.5" x2="617" y2="259.5" stroke="#000" stroke-width="1" shape-rendering="crispEdges"/><line x1="617" y1="260.5" x2="656" y2="260.5" stroke="#000" stroke-width="1" shape-rendering="crispEdges"/><line x1="656" y1="261.5" x2="678" y2="261.5" stroke="#000" stroke-width="1" shape-rendering="crispEdges"/><line x1="678" y1="262.5" x2="714" y2="262.5" stroke="#000" stroke-width="1" shape-rendering="crispEdges"/><line x1="714" y1="263.5" x2="731" y2="263.5" stroke="#000" stroke-width="1" shape-rendering="crispEdges"/><line x1="177.5" y1="240" x2="177.5" y2="269" stroke="#000" stroke-width="1" shape-rendering="crispEdges"/><line x1="228.5" y1="154" x2="228.5" y2="269" stroke="#ff0000" stroke-width="1" shape-rendering="crispEdges"/><line x1="228.5" y1="122" x2="228.5" y2="153" stroke="#000" stroke-width="1" shape-rendering="crispEdges"/><line x1="309.5" y1="181" x2="309.5" y2="269" stroke="#ff0000" stroke-width="1" shape-rendering="crispEdges"/><line x1="309.5" y1="146" x2="309.5" y2="177" stroke="#000" stroke-width="1" shape-rendering="crispEdges"/><line x1="372.5" y1="210" x2="372.5" y2="269" stroke="#ff0000" stroke-width="1" shape-rendering="crispEdges"/><line x1="372.5" y1="177" x2="372.5" y2="207" stroke="#000" stroke-width="1" shape-rendering="crispEdges"/><line x1="490.5" y1="258" x2="490.5" y2="269" stroke="#ff0000" stroke-width="1" shape-rendering="crispEdges"/><line x1="490.5" y1="230" x2="490.5" y2="258" stroke="#000" stroke-width="1" shape-rendering="crispEdges"/><line x1="551.5" y1="251" x2="551.5" y2="269" stroke="#ff0000" stroke-width="1" shape-rendering="crispEdges"/><line x1="551.5" y1="222" x2="551.5" y2="251" stroke="#000" stroke-width="1" shape-rendering="crispEdges"/><line x1="576.5" y1="238" x2="576.5" y2="269" stroke="#ff0000" stroke-width="1" shape-rendering="crispEdges"/><line x1="576.5" y1="201" x2="576.5" y2="231" stroke="#000" stroke-width="1" shape-rendering="crispEdges"/></svg><div class="t" style="position:absolute;left:117px;width:120px;top:228px;font-size:11px;line-height:11px;color:#000;white-space:nowrap;text-align:center">1.88308</div><div class="t" style="position:absolute;left:168px;width:120px;top:125px;font-size:11px;line-height:11px;color:#000;white-space:nowrap;text-align:center">1.87167</div><div class="t" style="position:absolute;left:249px;width:120px;top:133px;font-size:11px;line-height:11px;color:#000;white-space:nowrap;text-align:center">1.85404</div><div class="t" style="position:absolute;left:312px;width:120px;top:164px;font-size:11px;line-height:11px;color:#000;white-space:nowrap;text-align:center">1.84049</div><div class="t" style="position:absolute;left:430px;width:120px;top:217px;font-size:11px;line-height:11px;color:#000;white-space:nowrap;text-align:center">1.81563</div><div class="t" style="position:absolute;left:491px;width:120px;top:209px;font-size:11px;line-height:11px;color:#000;white-space:nowrap;text-align:center">1.80329</div><div class="t" style="position:absolute;left:516px;width:120px;top:188px;font-size:11px;line-height:11px;color:#000;white-space:nowrap;text-align:center">1.79814</div><div class="t" style="position:absolute;right:742px;top:249px;font-size:11px;line-height:11px;color:#000;white-space:nowrap">50</div><div class="t" style="position:absolute;right:742px;top:233px;font-size:11px;line-height:11px;color:#000;white-space:nowrap">100</div><div class="t" style="position:absolute;right:742px;top:218px;font-size:11px;line-height:11px;color:#000;white-space:nowrap">150</div><div class="t" style="position:absolute;right:742px;top:203px;font-size:11px;line-height:11px;color:#000;white-space:nowrap">200</div><div class="t" style="position:absolute;right:742px;top:188px;font-size:11px;line-height:11px;color:#000;white-space:nowrap">250</div><div class="t" style="position:absolute;right:742px;top:173px;font-size:11px;line-height:11px;color:#000;white-space:nowrap">300</div><div class="t" style="position:absolute;right:742px;top:158px;font-size:11px;line-height:11px;color:#000;white-space:nowrap">350</div><div class="t" style="position:absolute;right:742px;top:142px;font-size:11px;line-height:11px;color:#000;white-space:nowrap">400</div><div class="t" style="position:absolute;right:742px;top:127px;font-size:11px;line-height:11px;color:#000;white-space:nowrap">450</div><div class="t" style="position:absolute;right:742px;top:112px;font-size:11px;line-height:11px;color:#000;white-space:nowrap">500</div><div class="t" style="position:absolute;left:85.5px;width:120px;top:278px;font-size:11px;line-height:11px;color:#000;white-space:nowrap;text-align:center">48.1</div><div class="t" style="position:absolute;left:167.5px;width:120px;top:278px;font-size:11px;line-height:11px;color:#000;white-space:nowrap;text-align:center">48.6</div><div class="t" style="position:absolute;left:249.5px;width:120px;top:278px;font-size:11px;line-height:11px;color:#000;white-space:nowrap;text-align:center">49.1</div><div class="t" style="position:absolute;left:330.5px;width:120px;top:278px;font-size:11px;line-height:11px;color:#000;white-space:nowrap;text-align:center">49.6</div><div class="t" style="position:absolute;left:412.5px;width:120px;top:278px;font-size:11px;line-height:11px;color:#000;white-space:nowrap;text-align:center">50.1</div><div class="t" style="position:absolute;left:494.5px;width:120px;top:278px;font-size:11px;line-height:11px;color:#000;white-space:nowrap;text-align:center">50.6</div><div class="t" style="position:absolute;left:576.5px;width:120px;top:278px;font-size:11px;line-height:11px;color:#000;white-space:nowrap;text-align:center">51.1</div><div class="t" style="position:absolute;left:658.5px;width:120px;top:278px;font-size:11px;line-height:11px;color:#000;white-space:nowrap;text-align:center">51.6</div><svg style="position:absolute;left:748px;top:276px" width="16" height="11" shape-rendering="crispEdges"><g fill="#000"><rect x="1" y="2" width="1" height="1"/><rect x="2" y="2" width="1" height="1"/><rect x="0" y="3" width="1" height="1"/><rect x="3" y="3" width="1" height="1"/><rect x="3" y="4" width="1" height="1"/><rect x="3" y="5" width="1" height="1"/><rect x="2" y="6" width="1" height="1"/><rect x="1" y="7" width="1" height="1"/><rect x="0" y="8" width="1" height="1"/><rect x="0" y="9" width="1" height="1"/><rect x="3" y="9" width="1" height="1"/><rect x="0" y="10" width="1" height="1"/><rect x="1" y="10" width="1" height="1"/><rect x="2" y="10" width="1" height="1"/><rect x="3" y="10" width="1" height="1"/><rect x="7" y="2" width="1" height="1"/><rect x="8" y="2" width="1" height="1"/><rect x="9" y="2" width="1" height="1"/><rect x="6" y="3" width="1" height="1"/><rect x="10" y="3" width="1" height="1"/><rect x="6" y="4" width="1" height="1"/><rect x="10" y="4" width="1" height="1"/><rect x="6" y="5" width="1" height="1"/><rect x="10" y="5" width="1" height="1"/><rect x="6" y="6" width="1" height="1"/><rect x="8" y="6" width="1" height="1"/><rect x="10" y="6" width="1" height="1"/><rect x="6" y="7" width="1" height="1"/><rect x="10" y="7" width="1" height="1"/><rect x="6" y="8" width="1" height="1"/><rect x="10" y="8" width="1" height="1"/><rect x="6" y="9" width="1" height="1"/><rect x="10" y="9" width="1" height="1"/><rect x="7" y="10" width="1" height="1"/><rect x="8" y="10" width="1" height="1"/><rect x="9" y="10" width="1" height="1"/><rect x="14" y="0" width="1" height="1"/><rect x="13" y="1" width="1" height="1"/><rect x="15" y="1" width="1" height="1"/><rect x="14" y="2" width="1" height="1"/></g></svg><div class="t" style="position:absolute;left:29px;top:84px;font-size:11px;line-height:11px;color:#000;white-space:nowrap">I, имп/с</div><div style="position:absolute;left:141px;top:332px;width:517px;height:170px;background:#c0c0c0"></div><div style="position:absolute;left:141px;top:332px;width:517px;height:1px;background:#000"></div><div style="position:absolute;left:141px;top:332px;width:1px;height:170px;background:#000"></div><div style="position:absolute;left:141px;top:501px;width:517px;height:1px;background:#000"></div><div style="position:absolute;left:657px;top:332px;width:1px;height:170px;background:#000"></div><div style="position:absolute;left:142px;top:333px;width:515px;height:1px;background:#dfdfdf"></div><div style="position:absolute;left:142px;top:333px;width:1px;height:168px;background:#dfdfdf"></div><div style="position:absolute;left:142px;top:500px;width:515px;height:1px;background:#dfdfdf"></div><div style="position:absolute;left:656px;top:333px;width:1px;height:168px;background:#dfdfdf"></div><div class="t" style="position:absolute;left:294px;top:336px;font-size:11px;line-height:11px;color:#000080;white-space:nowrap;font-weight:bold;letter-spacing:0.5px;-webkit-text-stroke:0.2px #000080">Параметры пиков после уточнения</div><div style="position:absolute;left:151px;top:350px;width:495px;height:118px;background:#fff"></div><div style="position:absolute;left:151px;top:350px;width:495px;height:1px;background:#808080"></div><div style="position:absolute;left:151px;top:350px;width:1px;height:118px;background:#808080"></div><div style="position:absolute;left:151px;top:467px;width:495px;height:1px;background:#fff"></div><div style="position:absolute;left:645px;top:350px;width:1px;height:118px;background:#fff"></div><div style="position:absolute;left:152px;top:351px;width:493px;height:1px;background:#000"></div><div style="position:absolute;left:152px;top:351px;width:1px;height:116px;background:#000"></div><div style="position:absolute;left:152px;top:466px;width:493px;height:1px;background:#dfdfdf"></div><div style="position:absolute;left:644px;top:351px;width:1px;height:116px;background:#dfdfdf"></div><div style="position:absolute;left:153px;top:352px;width:21px;height:114px;background:#c0c0c0"></div><div style="position:absolute;left:153px;top:352px;width:474px;height:15px;background:#c0c0c0"></div><div style="position:absolute;left:153px;top:352px;width:21px;height:1px;background:#fff"></div><div style="position:absolute;left:153px;top:368px;width:21px;height:1px;background:#fff"></div><div style="position:absolute;left:153px;top:384px;width:21px;height:1px;background:#fff"></div><div style="position:absolute;left:153px;top:400px;width:21px;height:1px;background:#fff"></div><div style="position:absolute;left:153px;top:416px;width:21px;height:1px;background:#fff"></div><div style="position:absolute;left:153px;top:432px;width:21px;height:1px;background:#fff"></div><div style="position:absolute;left:153px;top:448px;width:21px;height:1px;background:#fff"></div><div style="position:absolute;left:153px;top:464px;width:21px;height:1px;background:#fff"></div><div style="position:absolute;left:153px;top:352px;width:1px;height:114px;background:#fff"></div><div style="position:absolute;left:175px;top:352px;width:1px;height:15px;background:#fff"></div><div style="position:absolute;left:227px;top:352px;width:1px;height:15px;background:#fff"></div><div style="position:absolute;left:297px;top:352px;width:1px;height:15px;background:#fff"></div><div style="position:absolute;left:347px;top:352px;width:1px;height:15px;background:#fff"></div><div style="position:absolute;left:397px;top:352px;width:1px;height:15px;background:#fff"></div><div style="position:absolute;left:467px;top:352px;width:1px;height:15px;background:#fff"></div><div style="position:absolute;left:507px;top:352px;width:1px;height:15px;background:#fff"></div><div style="position:absolute;left:547px;top:352px;width:1px;height:15px;background:#fff"></div><div style="position:absolute;left:587px;top:352px;width:1px;height:15px;background:#fff"></div><div style="position:absolute;left:176px;top:369px;width:50px;height:14px;background:#000080"></div><div style="position:absolute;left:228px;top:369px;width:68px;height:14px;background:#000080"></div><div style="position:absolute;left:298px;top:369px;width:48px;height:14px;background:#000080"></div><div style="position:absolute;left:348px;top:369px;width:48px;height:14px;background:#000080"></div><div style="position:absolute;left:398px;top:369px;width:68px;height:14px;background:#000080"></div><div style="position:absolute;left:468px;top:369px;width:38px;height:14px;background:#000080"></div><div style="position:absolute;left:508px;top:369px;width:38px;height:14px;background:#000080"></div><div style="position:absolute;left:548px;top:369px;width:38px;height:14px;background:#000080"></div><div style="position:absolute;left:588px;top:369px;width:38px;height:14px;background:#000080"></div><div style="position:absolute;left:174px;top:352px;width:1px;height:114px;background:#000"></div><div style="position:absolute;left:226px;top:352px;width:1px;height:114px;background:#000"></div><div style="position:absolute;left:296px;top:352px;width:1px;height:114px;background:#000"></div><div style="position:absolute;left:346px;top:352px;width:1px;height:114px;background:#000"></div><div style="position:absolute;left:396px;top:352px;width:1px;height:114px;background:#000"></div><div style="position:absolute;left:466px;top:352px;width:1px;height:114px;background:#000"></div><div style="position:absolute;left:506px;top:352px;width:1px;height:114px;background:#000"></div><div style="position:absolute;left:546px;top:352px;width:1px;height:114px;background:#000"></div><div style="position:absolute;left:586px;top:352px;width:1px;height:114px;background:#000"></div><div style="position:absolute;left:626px;top:352px;width:1px;height:114px;background:#000"></div><div style="position:absolute;left:153px;top:367px;width:474px;height:1px;background:#000"></div><div style="position:absolute;left:153px;top:383px;width:474px;height:1px;background:#000"></div><div style="position:absolute;left:153px;top:399px;width:474px;height:1px;background:#000"></div><div style="position:absolute;left:153px;top:415px;width:474px;height:1px;background:#000"></div><div style="position:absolute;left:153px;top:431px;width:474px;height:1px;background:#000"></div><div style="position:absolute;left:153px;top:447px;width:474px;height:1px;background:#000"></div><div style="position:absolute;left:153px;top:463px;width:474px;height:1px;background:#000"></div><svg style="position:absolute;left:187px;top:355px" width="11" height="9" shape-rendering="crispEdges"><g fill="#000"><rect x="1" y="0" width="1" height="1"/><rect x="2" y="0" width="1" height="1"/><rect x="3" y="0" width="1" height="1"/><rect x="0" y="1" width="1" height="1"/><rect x="4" y="1" width="1" height="1"/><rect x="4" y="2" width="1" height="1"/><rect x="4" y="3" width="1" height="1"/><rect x="3" y="4" width="1" height="1"/><rect x="2" y="5" width="1" height="1"/><rect x="1" y="6" width="1" height="1"/><rect x="0" y="7" width="1" height="1"/><rect x="0" y="8" width="1" height="1"/><rect x="1" y="8" width="1" height="1"/><rect x="2" y="8" width="1" height="1"/><rect x="3" y="8" width="1" height="1"/><rect x="4" y="8" width="1" height="1"/><rect x="7" y="0" width="1" height="1"/><rect x="8" y="0" width="1" height="1"/><rect x="9" y="0" width="1" height="1"/><rect x="6" y="1" width="1" height="1"/><rect x="10" y="1" width="1" height="1"/><rect x="6" y="2" width="1" height="1"/><rect x="10" y="2" width="1" height="1"/><rect x="6" y="3" width="1" height="1"/><rect x="10" y="3" width="1" height="1"/><rect x="6" y="4" width="1" height="1"/><rect x="8" y="4" width="1" height="1"/><rect x="10" y="4" width="1" height="1"/><rect x="6" y="5" width="1" height="1"/><rect x="10" y="5" width="1" height="1"/><rect x="6" y="6" width="1" height="1"/><rect x="10" y="6" width="1" height="1"/><rect x="6" y="7" width="1" height="1"/><rect x="10" y="7" width="1" height="1"/><rect x="7" y="8" width="1" height="1"/><rect x="8" y="8" width="1" height="1"/><rect x="9" y="8" width="1" height="1"/></g></svg><div class="t" style="position:absolute;left:199px;top:356px;font-size:11px;line-height:11px;white-space:nowrap;transform:scaleX(0.77);transform-origin:0 0">max</div><svg style="position:absolute;left:252px;top:355px" width="3" height="9" shape-rendering="crispEdges"><g fill="#000"><rect x="0" y="0" width="1" height="1"/><rect x="1" y="0" width="1" height="1"/><rect x="2" y="0" width="1" height="1"/><rect x="1" y="1" width="1" height="1"/><rect x="1" y="2" width="1" height="1"/><rect x="1" y="3" width="1" height="1"/><rect x="1" y="4" width="1" height="1"/><rect x="1" y="5" width="1" height="1"/><rect x="1" y="6" width="1" height="1"/><rect x="1" y="7" width="1" height="1"/><rect x="0" y="8" width="1" height="1"/><rect x="1" y="8" width="1" height="1"/><rect x="2" y="8" width="1" height="1"/></g></svg><div class="t" style="position:absolute;left:256px;top:356px;font-size:11px;line-height:11px;white-space:nowrap;transform:scaleX(0.77);transform-origin:0 0">max</div><svg style="position:absolute;left:361px;top:355px" width="11" height="9" shape-rendering="crispEdges"><g fill="#000"><rect x="1" y="0" width="1" height="1"/><rect x="2" y="0" width="1" height="1"/><rect x="3" y="0" width="1" height="1"/><rect x="0" y="1" width="1" height="1"/><rect x="4" y="1" width="1" height="1"/><rect x="4" y="2" width="1" height="1"/><rect x="4" y="3" width="1" height="1"/><rect x="3" y="4" width="1" height="1"/><rect x="2" y="5" width="1" height="1"/><rect x="1" y="6" width="1" height="1"/><rect x="0" y="7" width="1" height="1"/><rect x="0" y="8" width="1" height="1"/><rect x="1" y="8" width="1" height="1"/><rect x="2" y="8" width="1" height="1"/><rect x="3" y="8" width="1" height="1"/><rect x="4" y="8" width="1" height="1"/><rect x="7" y="0" width="1" height="1"/><rect x="8" y="0" width="1" height="1"/><rect x="9" y="0" width="1" height="1"/><rect x="6" y="1" width="1" height="1"/><rect x="10" y="1" width="1" height="1"/><rect x="6" y="2" width="1" height="1"/><rect x="10" y="2" width="1" height="1"/><rect x="6" y="3" width="1" height="1"/><rect x="10" y="3" width="1" height="1"/><rect x="6" y="4" width="1" height="1"/><rect x="8" y="4" width="1" height="1"/><rect x="10" y="4" width="1" height="1"/><rect x="6" y="5" width="1" height="1"/><rect x="10" y="5" width="1" height="1"/><rect x="6" y="6" width="1" height="1"/><rect x="10" y="6" width="1" height="1"/><rect x="6" y="7" width="1" height="1"/><rect x="10" y="7" width="1" height="1"/><rect x="7" y="8" width="1" height="1"/><rect x="8" y="8" width="1" height="1"/><rect x="9" y="8" width="1" height="1"/></g></svg><div class="t" style="position:absolute;left:373px;top:357px;font-size:11px;line-height:11px;white-space:nowrap;transform:scaleX(0.85);transform-origin:0 0">цт</div><svg style="position:absolute;left:424px;top:355px" width="3" height="9" shape-rendering="crispEdges"><g fill="#000"><rect x="0" y="0" width="1" height="1"/><rect x="1" y="0" width="1" height="1"/><rect x="2" y="0" width="1" height="1"/><rect x="1" y="1" width="1" height="1"/><rect x="1" y="2" width="1" height="1"/><rect x="1" y="3" width="1" height="1"/><rect x="1" y="4" width="1" height="1"/><rect x="1" y="5" width="1" height="1"/><rect x="1" y="6" width="1" height="1"/><rect x="1" y="7" width="1" height="1"/><rect x="0" y="8" width="1" height="1"/><rect x="1" y="8" width="1" height="1"/><rect x="2" y="8" width="1" height="1"/></g></svg><div class="t" style="position:absolute;left:428px;top:357px;font-size:11px;line-height:11px;white-space:nowrap;transform:scaleX(0.83);transform-origin:0 0">инт</div><div class="t" style="position:absolute;left:297px;width:49px;top:355px;font-size:11px;line-height:11px;color:#000;white-space:nowrap;text-align:center;">d</div><div class="t" style="position:absolute;left:467px;width:39px;top:355px;font-size:11px;line-height:11px;color:#000;white-space:nowrap;text-align:center;">w</div><div class="t" style="position:absolute;left:507px;width:39px;top:355px;font-size:11px;line-height:11px;color:#000;white-space:nowrap;text-align:center;">k</div><div class="t" style="position:absolute;left:547px;width:39px;top:355px;font-size:11px;line-height:11px;color:#000;white-space:nowrap;text-align:center;">a</div><div class="t" style="position:absolute;left:587px;width:39px;top:355px;font-size:11px;line-height:11px;color:#000;white-space:nowrap;text-align:center;">R</div><div class="t" style="position:absolute;right:573px;top:371px;font-size:11px;line-height:11px;color:#fff;white-space:nowrap;">48.2890</div><div class="t" style="position:absolute;right:503px;top:371px;font-size:11px;line-height:11px;color:#fff;white-space:nowrap;">1.4</div><div class="t" style="position:absolute;right:453px;top:371px;font-size:11px;line-height:11px;color:#fff;white-space:nowrap;">1.8831</div><div class="t" style="position:absolute;right:403px;top:371px;font-size:11px;line-height:11px;color:#fff;white-space:nowrap;">48.3680</div><div class="t" style="position:absolute;right:333px;top:371px;font-size:11px;line-height:11px;color:#fff;white-space:nowrap;">16.4</div><div class="t" style="position:absolute;right:293px;top:371px;font-size:11px;line-height:11px;color:#fff;white-space:nowrap;">0.120</div><div class="t" style="position:absolute;right:253px;top:371px;font-size:11px;line-height:11px;color:#fff;white-space:nowrap;">0.600</div><div class="t" style="position:absolute;right:213px;top:371px;font-size:11px;line-height:11px;color:#fff;white-space:nowrap;">1.000</div><div class="t" style="position:absolute;right:173px;top:371px;font-size:11px;line-height:11px;color:#fff;white-space:nowrap;">0.497</div><div class="t" style="position:absolute;right:573px;top:387px;font-size:11px;line-height:11px;color:#000;white-space:nowrap;">48.6024</div><div class="t" style="position:absolute;right:503px;top:387px;font-size:11px;line-height:11px;color:#000;white-space:nowrap;">383.8</div><div class="t" style="position:absolute;right:453px;top:387px;font-size:11px;line-height:11px;color:#000;white-space:nowrap;">1.8717</div><div class="t" style="position:absolute;right:403px;top:387px;font-size:11px;line-height:11px;color:#000;white-space:nowrap;">48.6414</div><div class="t" style="position:absolute;right:333px;top:387px;font-size:11px;line-height:11px;color:#000;white-space:nowrap;">4637.0</div><div class="t" style="position:absolute;right:293px;top:387px;font-size:11px;line-height:11px;color:#000;white-space:nowrap;">0.124</div><div class="t" style="position:absolute;right:253px;top:387px;font-size:11px;line-height:11px;color:#000;white-space:nowrap;">0.600</div><div class="t" style="position:absolute;right:213px;top:387px;font-size:11px;line-height:11px;color:#000;white-space:nowrap;">1.081</div><div class="t" style="position:absolute;right:173px;top:387px;font-size:11px;line-height:11px;color:#000;white-space:nowrap;">0.497</div><div class="t" style="position:absolute;right:573px;top:403px;font-size:11px;line-height:11px;color:#000;white-space:nowrap;">49.0950</div><div class="t" style="position:absolute;right:503px;top:403px;font-size:11px;line-height:11px;color:#000;white-space:nowrap;">293.3</div><div class="t" style="position:absolute;right:453px;top:403px;font-size:11px;line-height:11px;color:#000;white-space:nowrap;">1.8540</div><div class="t" style="position:absolute;right:403px;top:403px;font-size:11px;line-height:11px;color:#000;white-space:nowrap;">49.1343</div><div class="t" style="position:absolute;right:333px;top:403px;font-size:11px;line-height:11px;color:#000;white-space:nowrap;">3578.6</div><div class="t" style="position:absolute;right:293px;top:403px;font-size:11px;line-height:11px;color:#000;white-space:nowrap;">0.125</div><div class="t" style="position:absolute;right:253px;top:403px;font-size:11px;line-height:11px;color:#000;white-space:nowrap;">0.600</div><div class="t" style="position:absolute;right:213px;top:403px;font-size:11px;line-height:11px;color:#000;white-space:nowrap;">1.081</div><div class="t" style="position:absolute;right:173px;top:403px;font-size:11px;line-height:11px;color:#000;white-space:nowrap;">0.497</div><div class="t" style="position:absolute;right:573px;top:419px;font-size:11px;line-height:11px;color:#000;white-space:nowrap;">49.4807</div><div class="t" style="position:absolute;right:503px;top:419px;font-size:11px;line-height:11px;color:#000;white-space:nowrap;">197.4</div><div class="t" style="position:absolute;right:453px;top:419px;font-size:11px;line-height:11px;color:#000;white-space:nowrap;">1.8405</div><div class="t" style="position:absolute;right:403px;top:419px;font-size:11px;line-height:11px;color:#000;white-space:nowrap;">49.5204</div><div class="t" style="position:absolute;right:333px;top:419px;font-size:11px;line-height:11px;color:#000;white-space:nowrap;">2479.9</div><div class="t" style="position:absolute;right:293px;top:419px;font-size:11px;line-height:11px;color:#000;white-space:nowrap;">0.129</div><div class="t" style="position:absolute;right:253px;top:419px;font-size:11px;line-height:11px;color:#000;white-space:nowrap;">0.600</div><div class="t" style="position:absolute;right:213px;top:419px;font-size:11px;line-height:11px;color:#000;white-space:nowrap;">1.081</div><div class="t" style="position:absolute;right:173px;top:419px;font-size:11px;line-height:11px;color:#000;white-space:nowrap;">0.497</div><div class="t" style="position:absolute;right:573px;top:435px;font-size:11px;line-height:11px;color:#000;white-space:nowrap;">50.2047</div><div class="t" style="position:absolute;right:503px;top:435px;font-size:11px;line-height:11px;color:#000;white-space:nowrap;">36.6</div><div class="t" style="position:absolute;right:453px;top:435px;font-size:11px;line-height:11px;color:#000;white-space:nowrap;">1.8156</div><div class="t" style="position:absolute;right:403px;top:435px;font-size:11px;line-height:11px;color:#000;white-space:nowrap;">50.2459</div><div class="t" style="position:absolute;right:333px;top:435px;font-size:11px;line-height:11px;color:#000;white-space:nowrap;">363.2</div><div class="t" style="position:absolute;right:293px;top:435px;font-size:11px;line-height:11px;color:#000;white-space:nowrap;">0.102</div><div class="t" style="position:absolute;right:253px;top:435px;font-size:11px;line-height:11px;color:#000;white-space:nowrap;">0.600</div><div class="t" style="position:absolute;right:213px;top:435px;font-size:11px;line-height:11px;color:#000;white-space:nowrap;">1.081</div><div class="t" style="position:absolute;right:173px;top:435px;font-size:11px;line-height:11px;color:#000;white-space:nowrap;">0.497</div><div class="t" style="position:absolute;right:573px;top:451px;font-size:11px;line-height:11px;color:#000;white-space:nowrap;">50.5724</div><div class="t" style="position:absolute;right:503px;top:451px;font-size:11px;line-height:11px;color:#000;white-space:nowrap;">63.8</div><div class="t" style="position:absolute;right:453px;top:451px;font-size:11px;line-height:11px;color:#000;white-space:nowrap;">1.8033</div><div class="t" style="position:absolute;right:403px;top:451px;font-size:11px;line-height:11px;color:#000;white-space:nowrap;">50.6134</div><div class="t" style="position:absolute;right:333px;top:451px;font-size:11px;line-height:11px;color:#000;white-space:nowrap;">740.7</div><div class="t" style="position:absolute;right:293px;top:451px;font-size:11px;line-height:11px;color:#000;white-space:nowrap;">0.119</div><div class="t" style="position:absolute;right:253px;top:451px;font-size:11px;line-height:11px;color:#000;white-space:nowrap;">0.600</div><div class="t" style="position:absolute;right:213px;top:451px;font-size:11px;line-height:11px;color:#000;white-space:nowrap;">1.081</div><div class="t" style="position:absolute;right:173px;top:451px;font-size:11px;line-height:11px;color:#000;white-space:nowrap;">0.497</div><div style="position:absolute;left:627px;top:368px;width:17px;height:82px;background:#e0e0e0"></div><div style="position:absolute;left:627px;top:368px;width:17px;height:82px;background-image:repeating-conic-gradient(#c0c0c0 0 25%, #fff 0 50%);background-size:2px 2px"></div><div style="position:absolute;left:627px;top:352px;width:17px;height:16px;background:#c0c0c0"></div><div style="position:absolute;left:627px;top:352px;width:17px;height:1px;background:#dfdfdf"></div><div style="position:absolute;left:627px;top:352px;width:1px;height:16px;background:#dfdfdf"></div><div style="position:absolute;left:627px;top:367px;width:17px;height:1px;background:#000"></div><div style="position:absolute;left:643px;top:352px;width:1px;height:16px;background:#000"></div><div style="position:absolute;left:628px;top:353px;width:15px;height:1px;background:#fff"></div><div style="position:absolute;left:628px;top:353px;width:1px;height:14px;background:#fff"></div><div style="position:absolute;left:628px;top:366px;width:15px;height:1px;background:#808080"></div><div style="position:absolute;left:642px;top:353px;width:1px;height:14px;background:#808080"></div><div style="position:absolute;left:627px;top:450px;width:17px;height:16px;background:#c0c0c0"></div><div style="position:absolute;left:627px;top:450px;width:17px;height:1px;background:#dfdfdf"></div><div style="position:absolute;left:627px;top:450px;width:1px;height:16px;background:#dfdfdf"></div><div style="position:absolute;left:627px;top:465px;width:17px;height:1px;background:#000"></div><div style="position:absolute;left:643px;top:450px;width:1px;height:16px;background:#000"></div><div style="position:absolute;left:628px;top:451px;width:15px;height:1px;background:#fff"></div><div style="position:absolute;left:628px;top:451px;width:1px;height:14px;background:#fff"></div><div style="position:absolute;left:628px;top:464px;width:15px;height:1px;background:#808080"></div><div style="position:absolute;left:642px;top:451px;width:1px;height:14px;background:#808080"></div><div style="position:absolute;left:627px;top:415px;width:17px;height:16px;background:#c0c0c0"></div><div style="position:absolute;left:627px;top:415px;width:17px;height:1px;background:#dfdfdf"></div><div style="position:absolute;left:627px;top:415px;width:1px;height:16px;background:#dfdfdf"></div><div style="position:absolute;left:627px;top:430px;width:17px;height:1px;background:#000"></div><div style="position:absolute;left:643px;top:415px;width:1px;height:16px;background:#000"></div><div style="position:absolute;left:628px;top:416px;width:15px;height:1px;background:#fff"></div><div style="position:absolute;left:628px;top:416px;width:1px;height:14px;background:#fff"></div><div style="position:absolute;left:628px;top:429px;width:15px;height:1px;background:#808080"></div><div style="position:absolute;left:642px;top:416px;width:1px;height:14px;background:#808080"></div><svg style="position:absolute;left:628px;top:352px" width="16" height="16" shape-rendering="crispEdges"><path d="M7 6h1v1h1v1h1v1h1v1h-7v-1h1v-1h1v-1h1z" fill="#000"/></svg><svg style="position:absolute;left:628px;top:450px" width="16" height="16" shape-rendering="crispEdges"><path d="M4 6h7v1h-1v1h-1v1h-1v1h-1v-1h-1v-1h-1v-1h-1z" fill="#000"/></svg><div style="position:absolute;left:466px;top:477px;width:40px;height:21px;background:#c0c0c0"></div><div style="position:absolute;left:466px;top:477px;width:40px;height:1px;background:#fff"></div><div style="position:absolute;left:466px;top:477px;width:1px;height:21px;background:#fff"></div><div style="position:absolute;left:466px;top:497px;width:40px;height:1px;background:#000"></div><div style="position:absolute;left:505px;top:477px;width:1px;height:21px;background:#000"></div><div style="position:absolute;left:506px;top:477px;width:40px;height:21px;background:#c0c0c0"></div><div style="position:absolute;left:506px;top:477px;width:40px;height:1px;background:#fff"></div><div style="position:absolute;left:506px;top:477px;width:1px;height:21px;background:#fff"></div><div style="position:absolute;left:506px;top:497px;width:40px;height:1px;background:#000"></div><div style="position:absolute;left:545px;top:477px;width:1px;height:21px;background:#000"></div><div style="position:absolute;left:546px;top:477px;width:40px;height:21px;background:#c0c0c0"></div><div style="position:absolute;left:546px;top:477px;width:40px;height:1px;background:#fff"></div><div style="position:absolute;left:546px;top:477px;width:1px;height:21px;background:#fff"></div><div style="position:absolute;left:546px;top:497px;width:40px;height:1px;background:#000"></div><div style="position:absolute;left:585px;top:477px;width:1px;height:21px;background:#000"></div><div style="position:absolute;left:586px;top:477px;width:40px;height:21px;background:#c0c0c0"></div><div style="position:absolute;left:586px;top:477px;width:40px;height:1px;background:#fff"></div><div style="position:absolute;left:586px;top:477px;width:1px;height:21px;background:#fff"></div><div style="position:absolute;left:586px;top:497px;width:40px;height:1px;background:#000"></div><div style="position:absolute;left:625px;top:477px;width:1px;height:21px;background:#000"></div><svg style="position:absolute;left:466px;top:477px" width="40" height="21" shape-rendering="crispEdges"><path d="M19 6v10l-5-5z M25 6v10l-5-5z" fill="#000080"/></svg><svg style="position:absolute;left:506px;top:477px" width="40" height="21"><path d="M14 4.5 L20 10.5" stroke="#000" stroke-width="2.2" fill="none"/><path d="M19.5 10 L24.5 15" stroke="#000" stroke-width="1.3" fill="none"/><path d="M25 4.5 L20 9.5" stroke="#000" stroke-width="1.3" fill="none"/><path d="M20.5 9 L14.5 15" stroke="#000" stroke-width="2.2" fill="none"/></svg><svg style="position:absolute;left:558px;top:479px" width="16" height="16"><defs><pattern id="dithb" width="2" height="2" patternUnits="userSpaceOnUse"><rect width="2" height="2" fill="#000"/><rect width="1" height="1" fill="#0000ff"/><rect x="1" y="1" width="1" height="1" fill="#0000ff"/></pattern></defs><rect x="0" y="0" width="16" height="16" fill="url(#dithb)" shape-rendering="crispEdges"/><rect x="2" y="2" width="12" height="2" fill="#fff" shape-rendering="crispEdges"/><rect x="2" y="6" width="1" height="7" fill="#fff" shape-rendering="crispEdges"/><rect x="2" y="12" width="12" height="1" fill="#fff" shape-rendering="crispEdges"/><rect x="6" y="10" width="1" height="3" fill="#fff" shape-rendering="crispEdges"/><rect x="5" y="5" width="1" height="3" fill="#fff" shape-rendering="crispEdges"/><rect x="9" y="5" width="1" height="3" fill="#fff" shape-rendering="crispEdges"/><path d="M14 5.5 L14 13 L10.5 13 Z" fill="#fff"/></svg><svg style="position:absolute;left:586px;top:477px" width="40" height="21" shape-rendering="crispEdges"><path d="M15 6v10l5-5z M21 6v10l5-5z" fill="#000080"/></svg><svg style="position:absolute;left:4px;top:46px" width="23" height="22"><rect x="13" y="4" width="1" height="9" fill="#808080" shape-rendering="crispEdges"/><rect x="16" y="4" width="1" height="9" fill="#808080" shape-rendering="crispEdges"/><rect x="11" y="7" width="7" height="1" fill="#808080" shape-rendering="crispEdges"/><rect x="11" y="10" width="7" height="1" fill="#808080" shape-rendering="crispEdges"/><rect x="4" y="8" width="2" height="9" fill="#000" shape-rendering="crispEdges"/><rect x="9" y="8" width="2" height="1" fill="#000" shape-rendering="crispEdges"/><rect x="8" y="9" width="2" height="1" fill="#000" shape-rendering="crispEdges"/><rect x="7" y="10" width="2" height="1" fill="#000" shape-rendering="crispEdges"/><rect x="6" y="11" width="2" height="1" fill="#000" shape-rendering="crispEdges"/><rect x="6" y="12" width="2" height="1" fill="#000" shape-rendering="crispEdges"/><rect x="7" y="13" width="2" height="1" fill="#000" shape-rendering="crispEdges"/><rect x="8" y="14" width="2" height="1" fill="#000" shape-rendering="crispEdges"/><rect x="9" y="15" width="2" height="1" fill="#000" shape-rendering="crispEdges"/><rect x="10" y="16" width="2" height="1" fill="#000" shape-rendering="crispEdges"/><rect x="13" y="14" width="5" height="1" fill="#000" shape-rendering="crispEdges"/><rect x="13" y="15" width="1" height="1" fill="#000" shape-rendering="crispEdges"/><rect x="15" y="15" width="3" height="1" fill="#000" shape-rendering="crispEdges"/><rect x="12" y="16" width="7" height="1" fill="#000" shape-rendering="crispEdges"/></svg><svg style="position:absolute;left:29px;top:48px" width="18" height="18"><rect x="2" y="2" width="14" height="14" fill="#000" shape-rendering="crispEdges"/><rect x="3" y="3" width="12" height="12" fill="#dfdfdf" shape-rendering="crispEdges"/><rect x="4" y="4" width="2" height="1" fill="#000" shape-rendering="crispEdges"/><rect x="9" y="4" width="2" height="1" fill="#000" shape-rendering="crispEdges"/><rect x="12" y="4" width="2" height="1" fill="#000" shape-rendering="crispEdges"/><rect x="4" y="7" width="3" height="1" fill="#000" shape-rendering="crispEdges"/><rect x="9" y="7" width="5" height="1" fill="#000" shape-rendering="crispEdges"/><rect x="4" y="9" width="3" height="1" fill="#000" shape-rendering="crispEdges"/><rect x="9" y="9" width="5" height="1" fill="#000" shape-rendering="crispEdges"/><rect x="4" y="11" width="3" height="1" fill="#000" shape-rendering="crispEdges"/><rect x="9" y="11" width="5" height="1" fill="#000" shape-rendering="crispEdges"/><rect x="4" y="13" width="3" height="1" fill="#000" shape-rendering="crispEdges"/><rect x="9" y="13" width="5" height="1" fill="#000" shape-rendering="crispEdges"/></svg><svg style="position:absolute;left:50px;top:46px" width="23" height="22"><rect x="3" y="3" width="1" height="1" fill="#ffff00" shape-rendering="crispEdges"/><rect x="3" y="5" width="1" height="1" fill="#ffff00" shape-rendering="crispEdges"/><rect x="3" y="7" width="1" height="1" fill="#ffff00" shape-rendering="crispEdges"/><rect x="3" y="9" width="1" height="1" fill="#ffff00" shape-rendering="crispEdges"/><rect x="3" y="11" width="1" height="1" fill="#ffff00" shape-rendering="crispEdges"/><rect x="3" y="13" width="1" height="1" fill="#ffff00" shape-rendering="crispEdges"/><rect x="3" y="15" width="1" height="1" fill="#ffff00" shape-rendering="crispEdges"/><rect x="3" y="17" width="1" height="1" fill="#ffff00" shape-rendering="crispEdges"/><rect x="11" y="3" width="1" height="1" fill="#ffff00" shape-rendering="crispEdges"/><rect x="11" y="5" width="1" height="1" fill="#ffff00" shape-rendering="crispEdges"/><rect x="11" y="7" width="1" height="1" fill="#ffff00" shape-rendering="crispEdges"/><rect x="11" y="9" width="1" height="1" fill="#ffff00" shape-rendering="crispEdges"/><rect x="11" y="11" width="1" height="1" fill="#ffff00" shape-rendering="crispEdges"/><rect x="11" y="13" width="1" height="1" fill="#ffff00" shape-rendering="crispEdges"/><rect x="11" y="15" width="1" height="1" fill="#ffff00" shape-rendering="crispEdges"/><rect x="11" y="17" width="1" height="1" fill="#ffff00" shape-rendering="crispEdges"/><rect x="18" y="3" width="1" height="1" fill="#ffff00" shape-rendering="crispEdges"/><rect x="18" y="5" width="1" height="1" fill="#ffff00" shape-rendering="crispEdges"/><rect x="18" y="7" width="1" height="1" fill="#ffff00" shape-rendering="crispEdges"/><rect x="18" y="9" width="1" height="1" fill="#ffff00" shape-rendering="crispEdges"/><rect x="18" y="11" width="1" height="1" fill="#ffff00" shape-rendering="crispEdges"/><rect x="18" y="13" width="1" height="1" fill="#ffff00" shape-rendering="crispEdges"/><rect x="18" y="15" width="1" height="1" fill="#ffff00" shape-rendering="crispEdges"/><rect x="18" y="17" width="1" height="1" fill="#ffff00" shape-rendering="crispEdges"/><rect x="6" y="4" width="1" height="10" fill="#000" shape-rendering="crispEdges"/><rect x="8" y="9" width="1" height="5" fill="#000" shape-rendering="crispEdges"/><rect x="4" y="12" width="1" height="2" fill="#000" shape-rendering="crispEdges"/><rect x="4" y="13" width="7" height="1" fill="#000" shape-rendering="crispEdges"/><rect x="5" y="14" width="1" height="1" fill="#000" shape-rendering="crispEdges"/><rect x="7" y="14" width="1" height="1" fill="#000" shape-rendering="crispEdges"/><rect x="9" y="14" width="1" height="1" fill="#000" shape-rendering="crispEdges"/><rect x="14" y="12" width="1" height="4" fill="#000" shape-rendering="crispEdges"/><rect x="16" y="14" width="1" height="2" fill="#000" shape-rendering="crispEdges"/><rect x="12" y="14" width="1" height="2" fill="#000" shape-rendering="crispEdges"/><rect x="12" y="15" width="6" height="1" fill="#000" shape-rendering="crispEdges"/><rect x="13" y="16" width="1" height="1" fill="#000" shape-rendering="crispEdges"/><rect x="15" y="16" width="1" height="1" fill="#000" shape-rendering="crispEdges"/><rect x="17" y="16" width="1" height="1" fill="#000" shape-rendering="crispEdges"/></svg><svg style="position:absolute;left:81px;top:46px" width="23" height="22"><rect x="4" y="5" width="2" height="7" fill="#000" shape-rendering="crispEdges"/><rect x="3" y="7" width="1" height="1" fill="#000" shape-rendering="crispEdges"/><rect x="7" y="6" width="2" height="2" fill="#000" shape-rendering="crispEdges"/><rect x="7" y="9" width="2" height="2" fill="#000" shape-rendering="crispEdges"/><rect x="11" y="5" width="2" height="7" fill="#000" shape-rendering="crispEdges"/><rect x="10" y="7" width="1" height="1" fill="#000" shape-rendering="crispEdges"/><rect x="13" y="8" width="1" height="1" fill="#000" shape-rendering="crispEdges"/><rect x="14" y="8" width="1" height="1" fill="#000" shape-rendering="crispEdges"/><rect x="15" y="9" width="1" height="1" fill="#000" shape-rendering="crispEdges"/><rect x="16" y="10" width="1" height="1" fill="#000" shape-rendering="crispEdges"/><rect x="16" y="11" width="1" height="1" fill="#000" shape-rendering="crispEdges"/><rect x="16" y="12" width="1" height="1" fill="#000" shape-rendering="crispEdges"/><rect x="16" y="13" width="1" height="1" fill="#000" shape-rendering="crispEdges"/><rect x="15" y="14" width="1" height="1" fill="#000" shape-rendering="crispEdges"/><rect x="11" y="15" width="1" height="1" fill="#000" shape-rendering="crispEdges"/><rect x="12" y="15" width="1" height="1" fill="#000" shape-rendering="crispEdges"/><rect x="13" y="15" width="1" height="1" fill="#000" shape-rendering="crispEdges"/><rect x="14" y="15" width="1" height="1" fill="#000" shape-rendering="crispEdges"/><rect x="9" y="12" width="1" height="1" fill="#000" shape-rendering="crispEdges"/><rect x="9" y="13" width="1" height="1" fill="#000" shape-rendering="crispEdges"/><rect x="8" y="14" width="1" height="1" fill="#000" shape-rendering="crispEdges"/><rect x="7" y="14" width="1" height="1" fill="#000" shape-rendering="crispEdges"/><rect x="7" y="15" width="1" height="1" fill="#000" shape-rendering="crispEdges"/><rect x="6" y="15" width="1" height="1" fill="#000" shape-rendering="crispEdges"/><rect x="6" y="16" width="1" height="1" fill="#000" shape-rendering="crispEdges"/><rect x="5" y="16" width="1" height="1" fill="#000" shape-rendering="crispEdges"/><rect x="5" y="17" width="1" height="1" fill="#000" shape-rendering="crispEdges"/><rect x="6" y="17" width="1" height="1" fill="#000" shape-rendering="crispEdges"/><rect x="14" y="9" width="1" height="1" fill="#00ffff" shape-rendering="crispEdges"/><rect x="14" y="10" width="1" height="1" fill="#00ffff" shape-rendering="crispEdges"/><rect x="15" y="10" width="1" height="1" fill="#00ffff" shape-rendering="crispEdges"/><rect x="15" y="11" width="1" height="1" fill="#00ffff" shape-rendering="crispEdges"/><rect x="15" y="12" width="1" height="1" fill="#00ffff" shape-rendering="crispEdges"/><rect x="11" y="14" width="1" height="1" fill="#00ffff" shape-rendering="crispEdges"/><rect x="12" y="14" width="1" height="1" fill="#00ffff" shape-rendering="crispEdges"/></svg><svg style="position:absolute;left:104px;top:46px" width="23" height="22"><path d="M6.5 10.5 L11.5 5.5 L11.5 8.5 L15.5 8.5 L15.5 12.5 L11.5 12.5 L11.5 15.5 Z" fill="#0000ff" stroke="#000" stroke-width="1" stroke-linejoin="miter"/></svg><svg style="position:absolute;left:127px;top:46px" width="23" height="22"><path d="M15.5 10.5 L10.5 5.5 L10.5 8.5 L6.5 8.5 L6.5 12.5 L10.5 12.5 L10.5 15.5 Z" fill="#0000ff" stroke="#000" stroke-width="1" stroke-linejoin="miter"/></svg><svg style="position:absolute;left:158px;top:46px" width="23" height="22"><rect x="4" y="10" width="14" height="2" fill="#000" shape-rendering="crispEdges"/></svg><svg style="position:absolute;left:181px;top:46px" width="23" height="22"><path d="M4 12 L7.5 8.5 L8.5 8.5 L13.5 13.5 L14.5 13.5 L17.5 10.5" stroke="#000" stroke-width="1.8" fill="none"/></svg><svg style="position:absolute;left:204px;top:46px" width="23" height="22"><path d="M3 15.5 L18.5 15.5 M3.5 15.5 L6.5 11 L7.5 5.5 L8.5 4.5 L9.5 5.5 L10.5 11 L11.5 14.5 M11.5 14 L12.5 11 L14.5 10 L16.5 11 L18.5 15.5" stroke="#000" stroke-width="1.1" fill="none"/></svg><svg style="position:absolute;left:235px;top:46px" width="23" height="22"><path d="M7 4.5 L16.5 4.5 L15.5 9.5 L6 9.5 Z" fill="#fff" stroke="#000" stroke-width="1"/><rect x="8" y="6" width="6" height="1" fill="#000" shape-rendering="crispEdges"/><rect x="7" y="8" width="6" height="1" fill="#000" shape-rendering="crispEdges"/><path d="M4.5 10 L17.5 10 L18.5 12 L18.5 16 L17 17.5 L4.5 17.5 L3.5 16 L3.5 12 Z" fill="#c0c0c0" stroke="#000" stroke-width="1"/><rect x="4" y="11" width="13" height="1" fill="#fff" shape-rendering="crispEdges"/><rect x="4" y="13" width="14" height="1" fill="#000" shape-rendering="crispEdges"/><rect x="4" y="14" width="14" height="1" fill="#dfdfdf" shape-rendering="crispEdges"/><rect x="10" y="14" width="3" height="1" fill="#ffff00" shape-rendering="crispEdges"/><rect x="4" y="15" width="14" height="1" fill="#000" shape-rendering="crispEdges"/><rect x="5" y="16" width="11" height="1" fill="#fff" shape-rendering="crispEdges"/><rect x="18" y="18" width="1" height="1" fill="#fff" shape-rendering="crispEdges"/></svg><svg style="position:absolute;left:258px;top:46px" width="23" height="22"><g transform="translate(3,3)"><defs><pattern id="ditha" width="2" height="2" patternUnits="userSpaceOnUse"><rect width="2" height="2" fill="#000"/><rect width="1" height="1" fill="#0000ff"/><rect x="1" y="1" width="1" height="1" fill="#0000ff"/></pattern></defs><rect x="0" y="0" width="16" height="16" fill="url(#ditha)" shape-rendering="crispEdges"/><rect x="2" y="2" width="12" height="2" fill="#fff" shape-rendering="crispEdges"/><rect x="2" y="6" width="1" height="7" fill="#fff" shape-rendering="crispEdges"/><rect x="2" y="12" width="12" height="1" fill="#fff" shape-rendering="crispEdges"/><rect x="6" y="10" width="1" height="3" fill="#fff" shape-rendering="crispEdges"/><rect x="5" y="5" width="1" height="3" fill="#fff" shape-rendering="crispEdges"/><rect x="9" y="5" width="1" height="3" fill="#fff" shape-rendering="crispEdges"/><path d="M14 5.5 L14 13 L10.5 13 Z" fill="#fff"/></g></svg><svg style="position:absolute;left:281px;top:46px" width="23" height="22"><rect x="4" y="4" width="14" height="14" fill="#000" shape-rendering="crispEdges"/><rect x="5" y="5" width="1" height="12" fill="#808000" shape-rendering="crispEdges"/><rect x="16" y="5" width="1" height="12" fill="#808000" shape-rendering="crispEdges"/><rect x="5" y="11" width="12" height="2" fill="#808000" shape-rendering="crispEdges"/><rect x="7" y="5" width="8" height="6" fill="#c0c0c0" shape-rendering="crispEdges"/><rect x="6" y="13" width="10" height="4" fill="#000" shape-rendering="crispEdges"/><rect x="13" y="14" width="2" height="3" fill="#c0c0c0" shape-rendering="crispEdges"/><rect x="16" y="5" width="1" height="1" fill="#fff" shape-rendering="crispEdges"/></svg><svg style="position:absolute;left:304px;top:46px" width="23" height="22"><rect x="6" y="7" width="3" height="1" fill="#0000ff" shape-rendering="crispEdges"/><rect x="9" y="7" width="0" height="1" fill="#000" shape-rendering="crispEdges"/><rect x="5" y="8" width="2" height="1" fill="#0000ff" shape-rendering="crispEdges"/><rect x="8" y="8" width="1" height="1" fill="#0000ff" shape-rendering="crispEdges"/><rect x="9" y="8" width="1" height="1" fill="#000" shape-rendering="crispEdges"/><rect x="8" y="9" width="1" height="1" fill="#0000ff" shape-rendering="crispEdges"/><rect x="9" y="9" width="1" height="1" fill="#000" shape-rendering="crispEdges"/><rect x="7" y="10" width="1" height="1" fill="#0000ff" shape-rendering="crispEdges"/><rect x="8" y="10" width="1" height="1" fill="#000" shape-rendering="crispEdges"/><rect x="6" y="11" width="1" height="1" fill="#0000ff" shape-rendering="crispEdges"/><rect x="7" y="11" width="1" height="1" fill="#000" shape-rendering="crispEdges"/><rect x="5" y="12" width="1" height="2" fill="#0000ff" shape-rendering="crispEdges"/><rect x="6" y="12" width="1" height="2" fill="#000" shape-rendering="crispEdges"/><rect x="5" y="14" width="4" height="2" fill="#0000ff" shape-rendering="crispEdges"/><rect x="9" y="14" width="1" height="2" fill="#000" shape-rendering="crispEdges"/><rect x="12" y="7" width="3" height="1" fill="#0000ff" shape-rendering="crispEdges"/><rect x="15" y="7" width="1" height="1" fill="#000" shape-rendering="crispEdges"/><rect x="11" y="8" width="1" height="7" fill="#0000ff" shape-rendering="crispEdges"/><rect x="12" y="8" width="1" height="7" fill="#000" shape-rendering="crispEdges"/><rect x="15" y="8" width="1" height="7" fill="#0000ff" shape-rendering="crispEdges"/><rect x="16" y="8" width="1" height="7" fill="#000" shape-rendering="crispEdges"/><rect x="13" y="11" width="2" height="1" fill="#000" shape-rendering="crispEdges"/><rect x="12" y="15" width="3" height="1" fill="#0000ff" shape-rendering="crispEdges"/><rect x="15" y="15" width="1" height="1" fill="#000" shape-rendering="crispEdges"/></svg><svg style="position:absolute;left:327px;top:46px" width="23" height="22"><rect x="12" y="7" width="1" height="9" fill="#0000ff" shape-rendering="crispEdges"/><rect x="13" y="7" width="1" height="9" fill="#000" shape-rendering="crispEdges"/><rect x="9" y="10" width="3" height="1" fill="#0000ff" shape-rendering="crispEdges"/><rect x="8" y="11" width="1" height="4" fill="#0000ff" shape-rendering="crispEdges"/><rect x="9" y="11" width="1" height="4" fill="#000" shape-rendering="crispEdges"/><rect x="9" y="15" width="3" height="1" fill="#0000ff" shape-rendering="crispEdges"/></svg><svg style="position:absolute;left:350px;top:46px" width="23" height="22"><rect x="7" y="3" width="1" height="2" fill="#000080" shape-rendering="crispEdges"/><rect x="7" y="10" width="1" height="1" fill="#000080" shape-rendering="crispEdges"/><rect x="7" y="16" width="1" height="3" fill="#000080" shape-rendering="crispEdges"/><rect x="13" y="3" width="1" height="2" fill="#000080" shape-rendering="crispEdges"/><rect x="13" y="10" width="1" height="1" fill="#000080" shape-rendering="crispEdges"/><rect x="13" y="16" width="1" height="3" fill="#000080" shape-rendering="crispEdges"/><rect x="3" y="7" width="2" height="1" fill="#000080" shape-rendering="crispEdges"/><rect x="10" y="7" width="1" height="1" fill="#000080" shape-rendering="crispEdges"/><rect x="16" y="7" width="3" height="1" fill="#000080" shape-rendering="crispEdges"/><rect x="3" y="13" width="2" height="1" fill="#000080" shape-rendering="crispEdges"/><rect x="10" y="13" width="1" height="1" fill="#000080" shape-rendering="crispEdges"/><rect x="16" y="13" width="3" height="1" fill="#000080" shape-rendering="crispEdges"/><rect x="6" y="7" width="3" height="1" fill="#000080" shape-rendering="crispEdges"/><rect x="7" y="6" width="1" height="3" fill="#000080" shape-rendering="crispEdges"/><rect x="6" y="13" width="3" height="1" fill="#000080" shape-rendering="crispEdges"/><rect x="7" y="12" width="1" height="3" fill="#000080" shape-rendering="crispEdges"/><rect x="12" y="7" width="3" height="1" fill="#000080" shape-rendering="crispEdges"/><rect x="13" y="6" width="1" height="3" fill="#000080" shape-rendering="crispEdges"/><rect x="12" y="13" width="3" height="1" fill="#000080" shape-rendering="crispEdges"/><rect x="13" y="12" width="1" height="3" fill="#000080" shape-rendering="crispEdges"/></svg><svg style="position:absolute;left:373px;top:46px" width="23" height="22"><rect x="4" y="4" width="14" height="14" fill="#000" shape-rendering="crispEdges"/><rect x="5" y="5" width="1" height="12" fill="#0000ff" shape-rendering="crispEdges"/><rect x="16" y="5" width="1" height="12" fill="#0000ff" shape-rendering="crispEdges"/><rect x="5" y="11" width="12" height="2" fill="#0000ff" shape-rendering="crispEdges"/><rect x="7" y="5" width="8" height="6" fill="#fff" shape-rendering="crispEdges"/><rect x="6" y="13" width="10" height="4" fill="#000" shape-rendering="crispEdges"/><rect x="13" y="14" width="2" height="3" fill="#fff" shape-rendering="crispEdges"/><rect x="16" y="5" width="1" height="1" fill="#fff" shape-rendering="crispEdges"/></svg><svg style="position:absolute;left:396px;top:46px" width="23" height="22"><path d="M10 3 L12 3 L17.5 16 L14.5 16 Z" fill="#000" shape-rendering="crispEdges"/><path d="M8.8 8 L4.6 16" stroke="#000" stroke-width="1.3" fill="none"/><rect x="7" y="10" width="6" height="1" fill="#000" shape-rendering="crispEdges"/><rect x="3" y="16" width="4" height="1" fill="#000" shape-rendering="crispEdges"/><rect x="14" y="16" width="5" height="1" fill="#000" shape-rendering="crispEdges"/><rect x="3" y="3" width="7" height="5" fill="#000" shape-rendering="crispEdges"/><rect x="4" y="4" width="5" height="3" fill="#00ffff" shape-rendering="crispEdges"/></svg>
</body></html>
